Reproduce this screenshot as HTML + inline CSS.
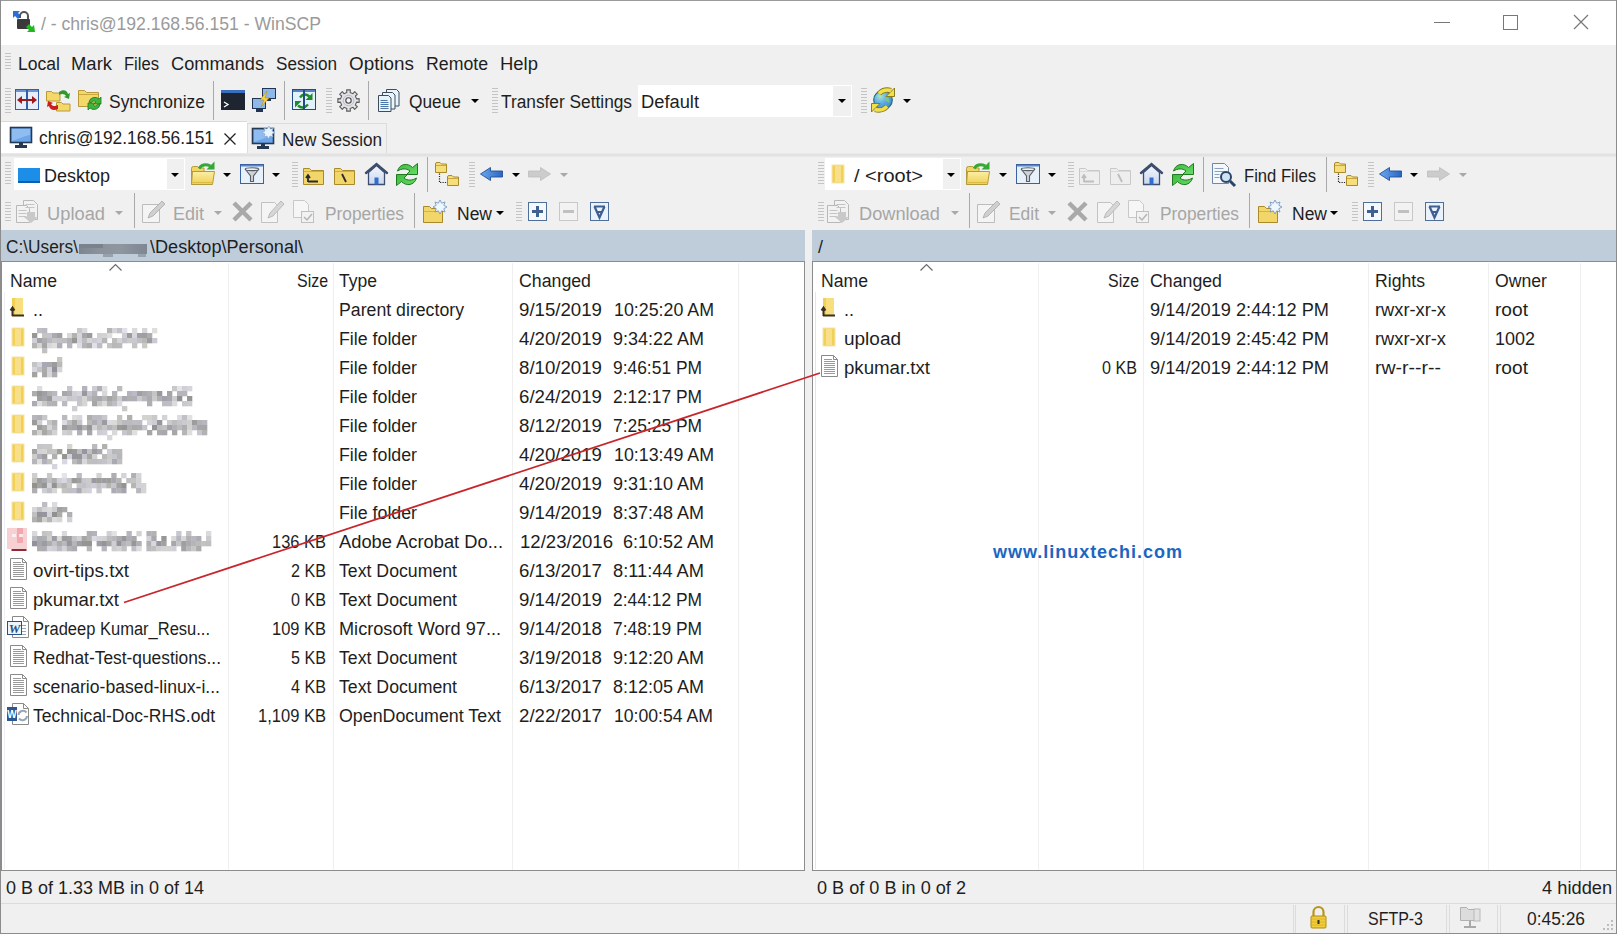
<!DOCTYPE html>
<html><head><meta charset="utf-8">
<style>
*{box-sizing:border-box;margin:0;padding:0}
html,body{width:1617px;height:934px;overflow:hidden;background:#f0f0f0;font-family:"Liberation Sans",sans-serif;font-size:18px;color:#1e1e1e}
.a{position:absolute}
svg.a{overflow:visible}
.t{position:absolute;white-space:pre;line-height:18px}
.grip{position:absolute;width:6px;background:repeating-linear-gradient(to bottom,#c4c4c4 0 1px,transparent 1px 3px)}
.dd{position:absolute;width:0;height:0;border-left:4px solid transparent;border-right:4px solid transparent;border-top:4px solid #000}
.g{color:#a6a6a6}
</style></head><body>
<div class="a" style="left:0px;top:0px;width:1617px;height:45px;background:#fff"></div>
<div class="t" style="left:40.70px;top:15px;color:#9a9a9a;transform:scaleX(0.9776);transform-origin:0 0">/ - chris@192.168.56.151 - WinSCP</div>
<svg class="a" style="left:11px;top:9px" width="26" height="25" viewBox="0 0 26 25">
<path d="M2 2h7l-2 2 3 3-3 3-3-3-2 2z" fill="#2a6fd6"/>
<path d="M9 9v-2a4 4 0 0 1 8 0v3" fill="none" stroke="#555" stroke-width="2"/>
<rect x="6" y="10" width="13" height="10" rx="1" fill="#3a3a3a"/>
<path d="M24 23h-8l2-2-3-3 3-3 3 3 2-2z" fill="#1fb81f"/>
</svg>
<div class="a" style="left:1434px;top:22px;width:16px;height:1px;background:#777"></div>
<div class="a" style="left:1503px;top:15px;width:15px;height:15px;border:1px solid #777"></div>
<svg class="a" style="left:1573px;top:14px" width="16" height="16" viewBox="0 0 16 16"><path d="M1 1L15 15M15 1L1 15" stroke="#777" stroke-width="1.2"/></svg>
<div class="grip" style="left:5px;top:53px;height:18px"></div>
<div class="t" style="left:17.70px;top:55px;;transform:scaleX(0.9760);transform-origin:0 0">Local</div>
<div class="t" style="left:70.70px;top:55px;;transform:scaleX(1.0250);transform-origin:0 0">Mark</div>
<div class="t" style="left:123.70px;top:55px;;transform:scaleX(0.9207);transform-origin:0 0">Files</div>
<div class="t" style="left:170.70px;top:55px;;transform:scaleX(1.0105);transform-origin:0 0">Commands</div>
<div class="t" style="left:275.70px;top:55px;;transform:scaleX(0.9524);transform-origin:0 0">Session</div>
<div class="t" style="left:348.70px;top:55px;;transform:scaleX(1.0476);transform-origin:0 0">Options</div>
<div class="t" style="left:425.70px;top:55px;;transform:scaleX(0.9836);transform-origin:0 0">Remote</div>
<div class="t" style="left:499.70px;top:55px;;transform:scaleX(1.0262);transform-origin:0 0">Help</div>
<div class="grip" style="left:5px;top:88px;height:25px"></div>
<svg class="a" style="left:15px;top:89px" width="24" height="21" viewBox="0 0 24 21">
<rect x="0.5" y="0.5" width="23" height="20" fill="#e6eefa" stroke="#2f5fa8"/>
<rect x="1" y="1" width="22" height="2" fill="#6c95d0"/>
<rect x="11" y="0" width="2" height="21" fill="#2f5fa8"/>
<path d="M2 11l5-4v3h10v-3l5 4-5 4v-3H7v3z" fill="#a01818"/></svg>
<svg class="a" style="left:46px;top:88px" width="25" height="24" viewBox="0 0 25 24">
<path d="M0.5 3.5h5l1.5 1.5h7v8h-13.5z" fill="#f5d86a" stroke="#b99a3a"/>
<path d="M10.5 14.5h5l1.5 1.5h7v7h-13.5z" fill="#f5d86a" stroke="#b99a3a"/>
<path d="M13 4c4-3 8-2 9 2l2-1-1 6-5-2 2-1c-1-2-4-3-7-1z" fill="#2e9a2e"/>
<path d="M12 21c-4 2-8 1-9-3l-2 1 1-6 5 2-2 1c1 2 4 3 7 1z" fill="#c81e1e"/></svg>
<svg class="a" style="left:78px;top:88px" width="25" height="24" viewBox="0 0 25 24">
<path d="M0.5 2.5h6l2 2h12v14h-20z" fill="#f5d86a" stroke="#b99a3a"/>
<rect x="1" y="6" width="19" height="1" fill="#c9a842"/>
<path d="M11 14a6 6 0 0 1 10-3l2-2v7h-7l2-2a3 3 0 0 0-5 1z" fill="#3fb43f" stroke="#1f7a1f" stroke-width="0.8"/>
<path d="M22 16a6 6 0 0 1-10 4l-2 2v-7h7l-2 2a3 3 0 0 0 5-1z" fill="#3fb43f" stroke="#1f7a1f" stroke-width="0.8"/></svg>
<div class="t" style="left:108.70px;top:93px;;transform:scaleX(0.9691);transform-origin:0 0">Synchronize</div>
<div class="a" style="left:213px;top:81px;width:1px;height:39px;background:#a9a9a9"></div>
<svg class="a" style="left:221px;top:90px" width="24" height="20" viewBox="0 0 24 20">
<rect x="0" y="0" width="24" height="20" fill="#1f2530"/>
<rect x="0" y="0" width="24" height="3" fill="#3a6fc0"/>
<path d="M3 12l4 2.5-4 2.5" fill="none" stroke="#fff" stroke-width="1.3"/></svg>
<svg class="a" style="left:252px;top:88px" width="25" height="24" viewBox="0 0 25 24">
<rect x="10.5" y="0.5" width="13" height="10" fill="#8fb8ea" stroke="#1f3553"/>
<rect x="15" y="11" width="4" height="2" fill="#1f3553"/>
<rect x="0.5" y="10.5" width="13" height="10" fill="#8fb8ea" stroke="#1f3553"/>
<rect x="4" y="21" width="7" height="3" fill="#1f3553"/>
<path d="M15 3l-7 9h4l-3 7 8-9h-4z" fill="#f5d44a" stroke="#b88b10" stroke-width="0.6"/></svg>
<div class="a" style="left:284px;top:81px;width:1px;height:39px;background:#a9a9a9"></div>
<svg class="a" style="left:292px;top:89px" width="24" height="21" viewBox="0 0 24 21">
<rect x="0.5" y="0.5" width="23" height="20" fill="#e2f2fa" stroke="#234a85"/>
<rect x="1" y="1" width="22" height="2" fill="#5a82c0"/>
<path d="M20.5 4V11H13.5Z" fill="#1f8a2a"/>
<path d="M8 8.5Q12 3 17.5 7.5" fill="none" stroke="#1f8a2a" stroke-width="2.4"/>
<path d="M3 12H9.5L3 18.6Z" fill="#1f8a2a"/>
<path d="M6 16.5Q11 21 16 15.5" fill="none" stroke="#1f8a2a" stroke-width="2.4"/>
<rect x="11" y="0" width="2" height="21" fill="#234a85"/></svg>
<div class="grip" style="left:326px;top:88px;height:25px"></div>
<svg class="a" style="left:337px;top:89px" width="23" height="23" viewBox="0 0 23 23">
<path d="M22.14,9.62 L22.14,13.38 L19.54,13.13 L18.34,16.03 L20.35,17.69 L17.69,20.35 L16.03,18.34 L13.13,19.54 L13.38,22.14 L9.62,22.14 L9.87,19.54 L6.97,18.34 L5.31,20.35 L2.65,17.69 L4.66,16.03 L3.46,13.13 L0.86,13.38 L0.86,9.62 L3.46,9.87 L4.66,6.97 L2.65,5.31 L5.31,2.65 L6.97,4.66 L9.87,3.46 L9.62,0.86 L13.38,0.86 L13.13,3.46 L16.03,4.66 L17.69,2.65 L20.35,5.31 L18.34,6.97 L19.54,9.87Z" fill="#e2e4e9" stroke="#5c5c5c" stroke-width="1.1" stroke-linejoin="round"/>
<circle cx="11.5" cy="11.5" r="5.3" fill="none" stroke="#b8bcc4" stroke-width="1"/>
<circle cx="11.5" cy="11.5" r="2.7" fill="#f4f4f6" stroke="#4a4a4a" stroke-width="1.1"/></svg>
<div class="a" style="left:368px;top:81px;width:1px;height:39px;background:#a9a9a9"></div>
<svg class="a" style="left:378px;top:89px" width="22" height="23" viewBox="0 0 22 23">
<path d="M8.5 0.5h10l2.5 2.5v14h-12.5z" fill="#eaf4fb" stroke="#3d4d5e"/>
<path d="M4.5 3.5h10l2.5 2.5v14h-12.5z" fill="#eaf4fb" stroke="#3d4d5e"/>
<path d="M0.5 6.5h10l2.5 2.5v13.5h-12.5z" fill="#eaf4fb" stroke="#3d4d5e"/>
<g stroke="#4a76a8" stroke-width="1.2"><path d="M2.5 11.5h7M2.5 13.5h8M2.5 15.5h8M2.5 17.5h8M2.5 19.5h8"/></g></svg>
<div class="t" style="left:408.70px;top:93px;;transform:scaleX(0.9621);transform-origin:0 0">Queue</div>
<div class="dd" style="left:471px;top:99px;border-top-color:#000"></div>
<div class="grip" style="left:492px;top:88px;height:25px"></div>
<div class="t" style="left:500.70px;top:93px;;transform:scaleX(0.9605);transform-origin:0 0">Transfer Settings</div>
<div class="a" style="left:638px;top:85px;width:214px;height:32px;background:#fff"></div>
<div class="a" style="left:833px;top:86px;width:18px;height:30px;background:#f0f0f0"></div>
<div class="t" style="left:640.70px;top:93px;;transform:scaleX(1.0167);transform-origin:0 0">Default</div>
<div class="dd" style="left:838px;top:99px;border-top-color:#000"></div>
<div class="grip" style="left:861px;top:88px;height:25px"></div>
<svg class="a" style="left:870px;top:88px" width="26" height="24" viewBox="0 0 26 24">
<defs><radialGradient id="glg" cx="0.35" cy="0.3" r="0.8"><stop offset="0" stop-color="#a8e8c8"/><stop offset="0.5" stop-color="#5aa8e8"/><stop offset="1" stop-color="#3f8ad0"/></radialGradient></defs>
<circle cx="13" cy="12" r="9.3" fill="url(#glg)" stroke="#2a6a7a" stroke-width="1.2"/>
<path d="M17 9c2 1 3 3 2 6-1-1-2-2-3-2s-1-3 1-4z" fill="#7ccf7c" opacity="0.8"/>
<g id="garr"><path d="M9 5.5Q14 0.5 21 2.5" fill="none" stroke="#8a7a20" stroke-width="5.2"/>
<path d="M24.5 0V8.5H16Z" fill="#f2e04a" stroke="#8a7a20" stroke-width="1"/>
<path d="M9 5.5Q14 0.5 21 2.5" fill="none" stroke="#f2e04a" stroke-width="3.4"/></g>
<g transform="rotate(180 13 12)"><path d="M9 5.5Q14 0.5 21 2.5" fill="none" stroke="#8a7a20" stroke-width="5.2"/>
<path d="M24.5 0V8.5H16Z" fill="#f2e04a" stroke="#8a7a20" stroke-width="1"/>
<path d="M9 5.5Q14 0.5 21 2.5" fill="none" stroke="#f2e04a" stroke-width="3.4"/></g></svg>
<div class="dd" style="left:903px;top:99px;border-top-color:#000"></div>
<div class="a" style="left:1px;top:153px;width:1615px;height:4px;background:linear-gradient(#ececec,#dedede 50%,#ececec)"></div>
<div class="a" style="left:1px;top:121px;width:246px;height:1px;background:#d9d9d9"></div>
<div class="a" style="left:1px;top:122px;width:246px;height:31px;background:#fff"></div>
<svg class="a" style="left:10px;top:127px" width="22" height="21" viewBox="0 0 22 21">
<rect x="0.5" y="0.5" width="21" height="15" fill="#6da6ec" stroke="#253a52" stroke-width="1.6"/>
<path d="M2 2h18v6c-6 1-12 4-18 6z" fill="#a8cdf5" opacity="0.6"/>
<rect x="9" y="16" width="4" height="2" fill="#253a52"/>
<rect x="5" y="18" width="12" height="3" fill="#253a52"/></svg>
<div class="t" style="left:38.70px;top:129px;;transform:scaleX(0.9647);transform-origin:0 0">chris@192.168.56.151</div>
<svg class="a" style="left:224px;top:132.5px" width="12" height="12" viewBox="0 0 12 12"><path d="M0.5 0.5L11.5 11.5M11.5 0.5L0.5 11.5" stroke="#222" stroke-width="1.3"/></svg>
<div class="a" style="left:247px;top:123px;width:140px;height:30px;background:#f0f0f0;border:1px solid #dcdcdc;border-bottom:none"></div>
<svg class="a" style="left:252px;top:128px" width="22" height="21" viewBox="0 0 22 21">
<rect x="0.5" y="0.5" width="21" height="15" fill="#6da6ec" stroke="#253a52" stroke-width="1.6"/>
<path d="M2 2h18v6c-6 1-12 4-18 6z" fill="#a8cdf5" opacity="0.6"/>
<rect x="9" y="16" width="4" height="2" fill="#253a52"/>
<rect x="5" y="18" width="12" height="3" fill="#253a52"/><path d="M17 -2l1.5 3 3-1-1.5 3 3 1.5-3 1.5 1 3-3-1-1.5 3-1.5-3-3 1 1-3-3-1.5 3-1.5-1-3 3 1z" fill="#e8f3ff" stroke="#7aa0c8" stroke-width="0.6"/></svg>
<div class="t" style="left:281.70px;top:131px;;transform:scaleX(0.9520);transform-origin:0 0">New Session</div>
<div class="grip" style="left:5px;top:162px;height:24px"></div>
<div class="a" style="left:14px;top:158px;width:171px;height:32px;background:#fff"></div>
<div class="a" style="left:167px;top:159px;width:17px;height:30px;background:#f0f0f0"></div>
<svg class="a" style="left:18px;top:168px" width="22" height="15" viewBox="0 0 22 15">
<rect x="0" y="0" width="22" height="15" fill="#1c8ee8"/>
<rect x="0" y="13" width="22" height="2" fill="#0d5fb0"/></svg>
<div class="t" style="left:43.70px;top:167px;;transform:scaleX(0.9993);transform-origin:0 0">Desktop</div>
<div class="dd" style="left:171px;top:173px;border-top-color:#000"></div>
<svg class="a" style="left:191px;top:161px" width="24" height="24" viewBox="0 0 24 24">
<defs><linearGradient id="ofg" x1="0" y1="0" x2="0" y2="1"><stop offset="0" stop-color="#fbeea8"/><stop offset="1" stop-color="#f0d050"/></linearGradient></defs>
<path d="M0.5 23.5V7.5Q0.5 5.5 2.5 5.5H6.5L8 7H13V10.5H0.5" fill="#f2d563" stroke="#b39a3a"/>
<path d="M1.5 10.5H23.5L21.5 23.5H0.5Z" fill="url(#ofg)" stroke="#b39a3a"/>
<path d="M1.5 21.5H21.5" stroke="#d9bb45" stroke-width="1"/>
<path d="M23.5 0.5V8.5H15.5Z" fill="#35a835"/>
<path d="M8 7.5Q12 1.5 19.5 5" fill="none" stroke="#35a835" stroke-width="3"/></svg>
<div class="dd" style="left:223px;top:173px;border-top-color:#000"></div>
<svg class="a" style="left:240px;top:164px" width="24" height="20" viewBox="0 0 24 20">
<rect x="0.5" y="0.5" width="23" height="19" fill="#e6f1fb" stroke="#3b62a0"/>
<rect x="1" y="1" width="22" height="1.5" fill="#5b86c8"/>
<path d="M5.5 5.5L10.5 12V17.5H13.5V12L18.5 5.5" fill="#cfd3d8" stroke="#5a5f66" stroke-width="1.1"/>
<ellipse cx="12" cy="5.2" rx="6.8" ry="1.4" fill="#eef0f2" stroke="#5a5f66" stroke-width="1.1"/></svg>
<div class="dd" style="left:272px;top:173px;border-top-color:#000"></div>
<div class="grip" style="left:292px;top:162px;height:25px"></div>
<svg class="a" style="left:303px;top:166px" width="21" height="19" viewBox="0 0 21 19">
<path d="M0.5 2.5h6l2 2h12v14h-20z" fill="#f3d66a" stroke="#a88a2a"/>
<rect x="1" y="5" width="19" height="1" fill="#a88a2a" opacity="0.5"/>
<path d="M5 15.5h10M5 16v-6M3 12l2-3 2 3" fill="none" stroke="#2b2b2b" stroke-width="1.8"/></svg>
<svg class="a" style="left:334px;top:166px" width="21" height="19" viewBox="0 0 21 19">
<path d="M0.5 2.5h6l2 2h12v14h-20z" fill="#f3d66a" stroke="#a88a2a"/>
<rect x="1" y="5" width="19" height="1" fill="#a88a2a" opacity="0.5"/>
<path d="M8 8l4 8" fill="none" stroke="#2b2b2b" stroke-width="1.8"/></svg>
<svg class="a" style="left:365px;top:163px" width="23" height="22" viewBox="0 0 23 22">
<defs><linearGradient id="hg" x1="0" y1="0" x2="0" y2="1"><stop offset="0" stop-color="#f4f7fd"/><stop offset="1" stop-color="#c8d6ef"/></linearGradient></defs>
<path d="M3.5 9.5L11.5 2.5L19.5 9.5V21.5H3.5z" fill="url(#hg)" stroke="#3c4d6e" stroke-width="1.3"/>
<path d="M1 10L11.5 1L22 10" fill="none" stroke="#3c4d6e" stroke-width="2.4" stroke-linecap="round"/>
<rect x="9.5" y="14.5" width="4" height="7" fill="#2f6fd0"/></svg>
<svg class="a" style="left:396px;top:162.5px" width="22" height="23" viewBox="0 0 22 23">
<defs><linearGradient id="rg" x1="0" y1="0" x2="1" y2="1"><stop offset="0" stop-color="#3fba3f"/><stop offset="1" stop-color="#66dc66"/></linearGradient></defs>
<path d="M1.5 8C3.5 0.5 12 -0.5 16.5 4.5L21.5 0.5V11.5H10.5L14 8C10.5 5 5.5 5.5 1.5 8Z" fill="url(#rg)" stroke="#1f7a1f" stroke-width="1" stroke-linejoin="round"/>
<path d="M20.5 15C18.5 22.5 10 23.5 5.5 18.5L0.5 22.5V11.5H11.5L8 15C11.5 18 16.5 17.5 20.5 15Z" fill="url(#rg)" stroke="#1f7a1f" stroke-width="1" stroke-linejoin="round"/></svg>
<div class="a" style="left:427px;top:157px;width:1px;height:35px;background:#a9a9a9"></div>
<svg class="a" style="left:435px;top:162px" width="24" height="24" viewBox="0 0 24 24">
<path d="M0.5 10.5V2Q0.5 0.5 2 0.5H5L6.5 2H11.5V10.5Z" fill="#f6de7a" stroke="#a88a2a"/>
<path d="M1 3.5H11" stroke="#c9a842"/>
<path d="M12.5 23.5V15Q12.5 13.5 14 13.5H17L18.5 15H23.5V23.5Z" fill="#f6de7a" stroke="#a88a2a"/>
<path d="M13 16.5H23" stroke="#c9a842"/>
<path d="M4.5 11.5V20.5H12" fill="none" stroke="#222" stroke-width="1.2" stroke-dasharray="1.2 1.2"/></svg>
<div class="grip" style="left:469px;top:162px;height:25px"></div>
<svg class="a" style="left:480px;top:167px" width="23" height="14" viewBox="0 0 23 14">
<defs><linearGradient id="bkg" x1="0" y1="0" x2="1" y2="0"><stop offset="0" stop-color="#6aa8f0"/><stop offset="1" stop-color="#2a66c0"/></linearGradient></defs>
<path d="M0.5 7L10.5 0.5V4H22.5V10H10.5V13.5Z" fill="url(#bkg)" stroke="#23509a" stroke-width="0.9" stroke-linejoin="round"/></svg>
<div class="dd" style="left:512px;top:173px;border-top-color:#000"></div>
<svg class="a" style="left:528px;top:167px" width="23" height="14" viewBox="0 0 23 14">
<path d="M22.5 7L12.5 0.5V4H0.5V10H12.5V13.5Z" fill="#cccccc" stroke="#bdbdbd" stroke-width="0.8" stroke-linejoin="round"/></svg>
<div class="dd" style="left:560px;top:173px;border-top-color:#a8a8a8"></div>
<div class="grip" style="left:5px;top:202px;height:20px"></div>
<svg class="a" style="left:16px;top:200px" width="23" height="23" viewBox="0 0 23 23">
<path d="M7.5 0.5h10l4 4v15h-14z" fill="#f2f2f2" stroke="#b8b8b8"/>
<path d="M0.5 5.5h10l3 3v14h-13z" fill="#f2f2f2" stroke="#b8b8b8"/>
<g stroke="#c4c4c4"><path d="M2.5 10.5h8M2.5 13.5h8M2.5 16.5h8M9.5 4.5h9M9.5 7.5h9"/></g>
<path d="M11 12h8v5h3l-7 6-7-6h3z" fill="#c9c9c9"/></svg>
<div class="t" style="left:46.70px;top:205px;color:#a6a6a6;transform:scaleX(1.0167);transform-origin:0 0">Upload</div>
<div class="dd" style="left:115px;top:211px;border-top-color:#a8a8a8"></div>
<div class="a" style="left:134px;top:193px;width:1px;height:35px;background:#a9a9a9"></div>
<svg class="a" style="left:142px;top:200px" width="24" height="23" viewBox="0 0 24 23">
<path d="M0.5 4.5h17v18h-17z" fill="#f4f4f4" stroke="#bcbcbc"/>
<path d="M6 18l2-5 12-12 3 3-12 12z" fill="#cfcfcf" stroke="#a8a8a8" stroke-width="0.8"/></svg>
<div class="t" style="left:172.70px;top:205px;color:#a6a6a6;transform:scaleX(0.9990);transform-origin:0 0">Edit</div>
<div class="dd" style="left:214px;top:211px;border-top-color:#a8a8a8"></div>
<svg class="a" style="left:232px;top:201px" width="21" height="21" viewBox="0 0 21 21">
<path d="M2 2l17 17M19 2l-17 17" stroke="#a9a9a9" stroke-width="4.5"/></svg>
<svg class="a" style="left:261px;top:200px" width="24" height="23" viewBox="0 0 24 23">
<path d="M0.5 2.5h13l3 3v17h-16z" fill="#f4f4f4" stroke="#c2c2c2"/>
<path d="M7 18l2-5 11-12 3 3-11 12z" fill="#d6d6d6" stroke="#b0b0b0" stroke-width="0.8"/></svg>
<svg class="a" style="left:293px;top:200px" width="22" height="23" viewBox="0 0 22 23">
<path d="M0.5 0.5h11l4 4v13h-15z" fill="#f6f6f6" stroke="#c8c8c8"/>
<rect x="8.5" y="11.5" width="12" height="11" fill="#f2f2f2" stroke="#c0c0c0"/>
<path d="M11 17l3 3 5-6" fill="none" stroke="#b5b5b5" stroke-width="1.5"/></svg>
<div class="t" style="left:324.70px;top:205px;color:#a6a6a6;transform:scaleX(0.9629);transform-origin:0 0">Properties</div>
<div class="a" style="left:414px;top:193px;width:1px;height:35px;background:#a9a9a9"></div>
<svg class="a" style="left:423px;top:200px" width="24" height="23" viewBox="0 0 24 23">
<path d="M0.5 6.5h6l2 2h11v14h-19z" fill="#f3d66a" stroke="#a88a2a"/>
<rect x="1" y="11" width="18" height="1" fill="#d4b648"/>
<path d="M17 0l1.7 3.2 3.3-1.2-1.2 3.3 3.2 1.7-3.2 1.7 1.2 3.3-3.3-1.2-1.7 3.2-1.7-3.2-3.3 1.2 1.2-3.3-3.2-1.7 3.2-1.7-1.2-3.3 3.3 1.2z" fill="#eef6ff" stroke="#6b8fb8" stroke-width="0.8"/></svg>
<div class="t" style="left:456.70px;top:205px;;transform:scaleX(0.9718);transform-origin:0 0">New</div>
<div class="dd" style="left:496px;top:211px;border-top-color:#000"></div>
<div class="grip" style="left:516px;top:202px;height:20px"></div>
<svg class="a" style="left:528px;top:202px" width="19" height="19" viewBox="0 0 19 19">
<rect x="0.5" y="0.5" width="18" height="18" fill="#f4f8fd" stroke="#4f6f9a"/>
<path d="M9.5 4v11M4 9.5h11" stroke="#3f5f90" stroke-width="3"/></svg>
<svg class="a" style="left:559px;top:202px" width="19" height="19" viewBox="0 0 19 19">
<rect x="0.5" y="0.5" width="18" height="18" fill="#f2f2f2" stroke="#c8c8c8"/>
<path d="M4 9.5h11" stroke="#c0c0c0" stroke-width="3"/></svg>
<svg class="a" style="left:590px;top:202px" width="19" height="19" viewBox="0 0 19 19">
<rect x="0.5" y="0.5" width="18" height="18" fill="#eaf2fb" stroke="#4f6f9a"/>
<path d="M4 4.5h11M4.5 4.5l5 11 5-11M7 10h5" fill="none" stroke="#3f5f90" stroke-width="2.2"/></svg>
<div class="grip" style="left:818px;top:162px;height:24px"></div>
<div class="a" style="left:825px;top:158px;width:136px;height:32px;background:#fff"></div>
<div class="a" style="left:943px;top:159px;width:17px;height:30px;background:#f0f0f0"></div>
<svg class="a" style="left:831px;top:165px" width="15" height="19" viewBox="0 0 15 19">
<rect x="1" y="0" width="12" height="18" fill="#f2cf55"/>
<rect x="4" y="1" width="6" height="16" fill="#f8e08a"/>
<rect x="1" y="0" width="12" height="18" fill="none" stroke="#f5e6b0" stroke-width="1"/></svg>
<div class="t" style="left:853.70px;top:167px;;transform:scaleX(1.1121);transform-origin:0 0">/ &lt;root&gt;</div>
<div class="dd" style="left:947px;top:173px;border-top-color:#000"></div>
<svg class="a" style="left:966px;top:161px" width="24" height="24" viewBox="0 0 24 24">
<defs><linearGradient id="ofg" x1="0" y1="0" x2="0" y2="1"><stop offset="0" stop-color="#fbeea8"/><stop offset="1" stop-color="#f0d050"/></linearGradient></defs>
<path d="M0.5 23.5V7.5Q0.5 5.5 2.5 5.5H6.5L8 7H13V10.5H0.5" fill="#f2d563" stroke="#b39a3a"/>
<path d="M1.5 10.5H23.5L21.5 23.5H0.5Z" fill="url(#ofg)" stroke="#b39a3a"/>
<path d="M1.5 21.5H21.5" stroke="#d9bb45" stroke-width="1"/>
<path d="M23.5 0.5V8.5H15.5Z" fill="#35a835"/>
<path d="M8 7.5Q12 1.5 19.5 5" fill="none" stroke="#35a835" stroke-width="3"/></svg>
<div class="dd" style="left:999px;top:173px;border-top-color:#000"></div>
<svg class="a" style="left:1016px;top:164px" width="24" height="20" viewBox="0 0 24 20">
<rect x="0.5" y="0.5" width="23" height="19" fill="#e6f1fb" stroke="#3b62a0"/>
<rect x="1" y="1" width="22" height="1.5" fill="#5b86c8"/>
<path d="M5.5 5.5L10.5 12V17.5H13.5V12L18.5 5.5" fill="#cfd3d8" stroke="#5a5f66" stroke-width="1.1"/>
<ellipse cx="12" cy="5.2" rx="6.8" ry="1.4" fill="#eef0f2" stroke="#5a5f66" stroke-width="1.1"/></svg>
<div class="dd" style="left:1048px;top:173px;border-top-color:#000"></div>
<div class="grip" style="left:1068px;top:162px;height:25px"></div>
<svg class="a" style="left:1079px;top:166px" width="21" height="19" viewBox="0 0 21 19">
<path d="M0.5 2.5h6l2 2h12v14h-20z" fill="#eeeeee" stroke="#c8c8c8"/>
<rect x="1" y="5" width="19" height="1" fill="#c8c8c8" opacity="0.5"/>
<path d="M5 15.5h10M5 16v-6M3 12l2-3 2 3" fill="none" stroke="#bdbdbd" stroke-width="1.8"/></svg>
<svg class="a" style="left:1110px;top:166px" width="21" height="19" viewBox="0 0 21 19">
<path d="M0.5 2.5h6l2 2h12v14h-20z" fill="#eeeeee" stroke="#c8c8c8"/>
<rect x="1" y="5" width="19" height="1" fill="#c8c8c8" opacity="0.5"/>
<path d="M8 8l4 8" fill="none" stroke="#bdbdbd" stroke-width="1.8"/></svg>
<svg class="a" style="left:1140px;top:163px" width="23" height="22" viewBox="0 0 23 22">
<defs><linearGradient id="hg" x1="0" y1="0" x2="0" y2="1"><stop offset="0" stop-color="#f4f7fd"/><stop offset="1" stop-color="#c8d6ef"/></linearGradient></defs>
<path d="M3.5 9.5L11.5 2.5L19.5 9.5V21.5H3.5z" fill="url(#hg)" stroke="#3c4d6e" stroke-width="1.3"/>
<path d="M1 10L11.5 1L22 10" fill="none" stroke="#3c4d6e" stroke-width="2.4" stroke-linecap="round"/>
<rect x="9.5" y="14.5" width="4" height="7" fill="#2f6fd0"/></svg>
<svg class="a" style="left:1172px;top:162.5px" width="22" height="23" viewBox="0 0 22 23">
<defs><linearGradient id="rg" x1="0" y1="0" x2="1" y2="1"><stop offset="0" stop-color="#3fba3f"/><stop offset="1" stop-color="#66dc66"/></linearGradient></defs>
<path d="M1.5 8C3.5 0.5 12 -0.5 16.5 4.5L21.5 0.5V11.5H10.5L14 8C10.5 5 5.5 5.5 1.5 8Z" fill="url(#rg)" stroke="#1f7a1f" stroke-width="1" stroke-linejoin="round"/>
<path d="M20.5 15C18.5 22.5 10 23.5 5.5 18.5L0.5 22.5V11.5H11.5L8 15C11.5 18 16.5 17.5 20.5 15Z" fill="url(#rg)" stroke="#1f7a1f" stroke-width="1" stroke-linejoin="round"/></svg>
<div class="a" style="left:1203px;top:157px;width:1px;height:35px;background:#a9a9a9"></div>
<svg class="a" style="left:1212px;top:163px" width="24" height="23" viewBox="0 0 24 23">
<path d="M0.5 0.5h12l4 4v16h-16z" fill="#f4f7fb" stroke="#6f87a8"/>
<g stroke="#8aa0bf"><path d="M2.5 5.5h9M2.5 8.5h11M2.5 11.5h5M2.5 14.5h5"/></g>
<circle cx="14" cy="14" r="5" fill="#cfe3f7" stroke="#2c4466" stroke-width="2"/>
<path d="M18 18l5 5" stroke="#2c4466" stroke-width="3"/></svg>
<div class="t" style="left:1243.70px;top:167px;;transform:scaleX(0.9227);transform-origin:0 0">Find Files</div>
<div class="a" style="left:1326px;top:157px;width:1px;height:35px;background:#a9a9a9"></div>
<svg class="a" style="left:1334px;top:162px" width="24" height="24" viewBox="0 0 24 24">
<path d="M0.5 10.5V2Q0.5 0.5 2 0.5H5L6.5 2H11.5V10.5Z" fill="#f6de7a" stroke="#a88a2a"/>
<path d="M1 3.5H11" stroke="#c9a842"/>
<path d="M12.5 23.5V15Q12.5 13.5 14 13.5H17L18.5 15H23.5V23.5Z" fill="#f6de7a" stroke="#a88a2a"/>
<path d="M13 16.5H23" stroke="#c9a842"/>
<path d="M4.5 11.5V20.5H12" fill="none" stroke="#222" stroke-width="1.2" stroke-dasharray="1.2 1.2"/></svg>
<div class="grip" style="left:1368px;top:162px;height:25px"></div>
<svg class="a" style="left:1379px;top:167px" width="23" height="14" viewBox="0 0 23 14">
<defs><linearGradient id="bkg" x1="0" y1="0" x2="1" y2="0"><stop offset="0" stop-color="#6aa8f0"/><stop offset="1" stop-color="#2a66c0"/></linearGradient></defs>
<path d="M0.5 7L10.5 0.5V4H22.5V10H10.5V13.5Z" fill="url(#bkg)" stroke="#23509a" stroke-width="0.9" stroke-linejoin="round"/></svg>
<div class="dd" style="left:1410px;top:173px;border-top-color:#000"></div>
<svg class="a" style="left:1427px;top:167px" width="23" height="14" viewBox="0 0 23 14">
<path d="M22.5 7L12.5 0.5V4H0.5V10H12.5V13.5Z" fill="#cccccc" stroke="#bdbdbd" stroke-width="0.8" stroke-linejoin="round"/></svg>
<div class="dd" style="left:1459px;top:173px;border-top-color:#a8a8a8"></div>
<div class="grip" style="left:818px;top:202px;height:20px"></div>
<svg class="a" style="left:827px;top:200px" width="23" height="23" viewBox="0 0 23 23">
<path d="M7.5 0.5h10l4 4v15h-14z" fill="#f2f2f2" stroke="#b8b8b8"/>
<path d="M0.5 5.5h10l3 3v14h-13z" fill="#f2f2f2" stroke="#b8b8b8"/>
<g stroke="#c4c4c4"><path d="M2.5 10.5h8M2.5 13.5h8M2.5 16.5h8M9.5 4.5h9M9.5 7.5h9"/></g>
<path d="M11 12h8v5h3l-7 6-7-6h3z" fill="#c9c9c9"/></svg>
<div class="t" style="left:858.70px;top:205px;color:#a6a6a6;transform:scaleX(1.0117);transform-origin:0 0">Download</div>
<div class="dd" style="left:951px;top:211px;border-top-color:#a8a8a8"></div>
<div class="a" style="left:969px;top:193px;width:1px;height:35px;background:#a9a9a9"></div>
<svg class="a" style="left:977px;top:200px" width="24" height="23" viewBox="0 0 24 23">
<path d="M0.5 4.5h17v18h-17z" fill="#f4f4f4" stroke="#bcbcbc"/>
<path d="M6 18l2-5 12-12 3 3-12 12z" fill="#cfcfcf" stroke="#a8a8a8" stroke-width="0.8"/></svg>
<div class="t" style="left:1008.70px;top:205px;color:#a6a6a6;transform:scaleX(0.9668);transform-origin:0 0">Edit</div>
<div class="dd" style="left:1048px;top:211px;border-top-color:#a8a8a8"></div>
<svg class="a" style="left:1067px;top:201px" width="21" height="21" viewBox="0 0 21 21">
<path d="M2 2l17 17M19 2l-17 17" stroke="#a9a9a9" stroke-width="4.5"/></svg>
<svg class="a" style="left:1097px;top:200px" width="24" height="23" viewBox="0 0 24 23">
<path d="M0.5 2.5h13l3 3v17h-16z" fill="#f4f4f4" stroke="#c2c2c2"/>
<path d="M7 18l2-5 11-12 3 3-11 12z" fill="#d6d6d6" stroke="#b0b0b0" stroke-width="0.8"/></svg>
<svg class="a" style="left:1128px;top:200px" width="22" height="23" viewBox="0 0 22 23">
<path d="M0.5 0.5h11l4 4v13h-15z" fill="#f6f6f6" stroke="#c8c8c8"/>
<rect x="8.5" y="11.5" width="12" height="11" fill="#f2f2f2" stroke="#c0c0c0"/>
<path d="M11 17l3 3 5-6" fill="none" stroke="#b5b5b5" stroke-width="1.5"/></svg>
<div class="t" style="left:1159.70px;top:205px;color:#a6a6a6;transform:scaleX(0.9629);transform-origin:0 0">Properties</div>
<div class="a" style="left:1249px;top:193px;width:1px;height:35px;background:#a9a9a9"></div>
<svg class="a" style="left:1258px;top:200px" width="24" height="23" viewBox="0 0 24 23">
<path d="M0.5 6.5h6l2 2h11v14h-19z" fill="#f3d66a" stroke="#a88a2a"/>
<rect x="1" y="11" width="18" height="1" fill="#d4b648"/>
<path d="M17 0l1.7 3.2 3.3-1.2-1.2 3.3 3.2 1.7-3.2 1.7 1.2 3.3-3.3-1.2-1.7 3.2-1.7-3.2-3.3 1.2 1.2-3.3-3.2-1.7 3.2-1.7-1.2-3.3 3.3 1.2z" fill="#eef6ff" stroke="#6b8fb8" stroke-width="0.8"/></svg>
<div class="t" style="left:1291.70px;top:205px;;transform:scaleX(0.9718);transform-origin:0 0">New</div>
<div class="dd" style="left:1330px;top:211px;border-top-color:#000"></div>
<div class="grip" style="left:1352px;top:202px;height:20px"></div>
<svg class="a" style="left:1363px;top:202px" width="19" height="19" viewBox="0 0 19 19">
<rect x="0.5" y="0.5" width="18" height="18" fill="#f4f8fd" stroke="#4f6f9a"/>
<path d="M9.5 4v11M4 9.5h11" stroke="#3f5f90" stroke-width="3"/></svg>
<svg class="a" style="left:1394px;top:202px" width="19" height="19" viewBox="0 0 19 19">
<rect x="0.5" y="0.5" width="18" height="18" fill="#f2f2f2" stroke="#c8c8c8"/>
<path d="M4 9.5h11" stroke="#c0c0c0" stroke-width="3"/></svg>
<svg class="a" style="left:1425px;top:202px" width="19" height="19" viewBox="0 0 19 19">
<rect x="0.5" y="0.5" width="18" height="18" fill="#eaf2fb" stroke="#4f6f9a"/>
<path d="M4 4.5h11M4.5 4.5l5 11 5-11M7 10h5" fill="none" stroke="#3f5f90" stroke-width="2.2"/></svg>
<div class="a" style="left:1px;top:230px;width:804px;height:31px;background:#bfcddb"></div>
<div class="a" style="left:812px;top:230px;width:804px;height:31px;background:#bfcddb"></div>
<div class="t" style="left:5.70px;top:238px;;transform:scaleX(0.9598);transform-origin:0 0">C:\Users\</div>
<div class="a" style="left:79px;top:244px;width:68px;height:10px;background:linear-gradient(90deg,#7d8590,#8b929c 30%,#8e96a0 60%,#868e99 80%,#7e8792)"></div>
<div class="a" style="left:79px;top:244px;width:24px;height:4px;background:#7a828c"></div>
<div class="a" style="left:103px;top:254px;width:10px;height:3px;background:#98a0aa"></div>
<div class="a" style="left:138px;top:254px;width:8px;height:3px;background:#9aa2ac"></div>
<div class="t" style="left:149.70px;top:238px;;transform:scaleX(1.0061);transform-origin:0 0">\Desktop\Personal\</div>
<div class="t" style="left:818px;top:238px;">/</div>
<div class="a" style="left:1px;top:261px;width:804px;height:610px;background:#fff;border:1px solid #8c8c8c;border-right-color:#8c8c8c"></div>
<div class="a" style="left:812px;top:261px;width:805px;height:610px;background:#fff;border:1px solid #8c8c8c"></div>
<div class="a" style="left:815px;top:292px;width:1px;height:577px;background:#dfe6ee"></div>
<div class="a" style="left:4px;top:292px;width:1px;height:577px;background:#eef1f5"></div>
<div class="a" style="left:228px;top:263px;width:1px;height:607px;background:#efefef"></div>
<div class="a" style="left:333px;top:263px;width:1px;height:607px;background:#efefef"></div>
<div class="a" style="left:512px;top:263px;width:1px;height:607px;background:#efefef"></div>
<div class="a" style="left:738px;top:263px;width:1px;height:607px;background:#efefef"></div>
<div class="a" style="left:1038px;top:263px;width:1px;height:607px;background:#efefef"></div>
<div class="a" style="left:1143px;top:263px;width:1px;height:607px;background:#efefef"></div>
<div class="a" style="left:1368px;top:263px;width:1px;height:607px;background:#efefef"></div>
<div class="a" style="left:1488px;top:263px;width:1px;height:607px;background:#efefef"></div>
<div class="a" style="left:1580px;top:263px;width:1px;height:607px;background:#efefef"></div>
<div class="t" style="left:9.70px;top:272px;;transform:scaleX(0.9788);transform-origin:0 0">Name</div>
<div class="t" style="right:1289.30px;top:272px;;transform:scaleX(0.8853);transform-origin:100% 0">Size</div>
<div class="t" style="left:338.70px;top:272px;;transform:scaleX(0.9736);transform-origin:0 0">Type</div>
<div class="t" style="left:518.70px;top:272px;;transform:scaleX(0.9852);transform-origin:0 0">Changed</div>
<svg class="a" style="left:109px;top:264px" width="13" height="7" viewBox="0 0 13 7"><path d="M0.5 6.5L6.5 0.5L12.5 6.5" fill="none" stroke="#6a6a6a" stroke-width="1.2"/></svg>
<div class="t" style="left:820.70px;top:272px;;transform:scaleX(0.9788);transform-origin:0 0">Name</div>
<div class="t" style="right:478.30px;top:272px;;transform:scaleX(0.8853);transform-origin:100% 0">Size</div>
<div class="t" style="left:1149.70px;top:272px;;transform:scaleX(0.9852);transform-origin:0 0">Changed</div>
<div class="t" style="left:1374.70px;top:272px;;transform:scaleX(0.9798);transform-origin:0 0">Rights</div>
<div class="t" style="left:1494.70px;top:272px;;transform:scaleX(0.9808);transform-origin:0 0">Owner</div>
<svg class="a" style="left:920px;top:264px" width="13" height="7" viewBox="0 0 13 7"><path d="M0.5 6.5L6.5 0.5L12.5 6.5" fill="none" stroke="#6a6a6a" stroke-width="1.2"/></svg>
<svg class="a" style="left:10px;top:298px" width="16" height="19" viewBox="0 0 16 19">
<rect x="2" y="0" width="11" height="17" fill="#f2cf55"/>
<rect x="5" y="0" width="8" height="17" fill="#f7de7f"/>
<path d="M2 17.5h12M2.5 18V10M0.5 12.5l2-3 2 3" fill="none" stroke="#3a3020" stroke-width="2"/></svg>
<div class="t" style="left:33px;top:301px;">..</div>
<div class="t" style="left:338.70px;top:301px;;transform:scaleX(0.9838);transform-origin:0 0">Parent directory</div>
<div class="t" style="left:518.70px;top:301px;;transform:scaleX(1.0365);transform-origin:0 0">9/15/2019</div>
<div class="t" style="left:613.70px;top:301px;;transform:scaleX(0.9893);transform-origin:0 0">10:25:20 AM</div>
<svg class="a" style="left:11px;top:328px" width="15" height="19" viewBox="0 0 15 19">
<rect x="1" y="0" width="12" height="18" fill="#f2cf55"/>
<rect x="4" y="1" width="6" height="16" fill="#f8e08a"/>
<rect x="1" y="0" width="12" height="18" fill="none" stroke="#f5e6b0" stroke-width="1"/></svg>
<svg class="a" style="left:32px;top:328px" width="126" height="25" viewBox="0 0 126 25"><rect x="0.0" y="5" width="5.3" height="5.3" fill="rgb(151,151,150)"/><rect x="0.0" y="10" width="5.3" height="5.3" fill="rgb(207,207,216)"/><rect x="0.0" y="15" width="5.3" height="5.3" fill="rgb(180,180,176)"/><rect x="5.0" y="0" width="5.3" height="5.3" fill="rgb(190,190,197)"/><rect x="5.0" y="10" width="5.3" height="5.3" fill="rgb(162,162,167)"/><rect x="5.0" y="15" width="5.3" height="5.3" fill="rgb(213,213,213)"/><rect x="10.0" y="0" width="5.3" height="5.3" fill="rgb(186,186,192)"/><rect x="10.0" y="5" width="5.3" height="5.3" fill="rgb(196,196,194)"/><rect x="10.0" y="10" width="5.3" height="5.3" fill="rgb(175,175,178)"/><rect x="10.0" y="15" width="5.3" height="5.3" fill="rgb(165,165,170)"/><rect x="10.0" y="20" width="5.3" height="5.3" fill="rgb(193,193,192)"/><rect x="15.0" y="5" width="5.3" height="5.3" fill="rgb(196,196,204)"/><rect x="15.0" y="10" width="5.3" height="5.3" fill="rgb(185,185,191)"/><rect x="15.0" y="15" width="5.3" height="5.3" fill="rgb(215,215,218)"/><rect x="20.0" y="5" width="5.3" height="5.3" fill="rgb(170,170,179)"/><rect x="20.0" y="10" width="5.3" height="5.3" fill="rgb(197,197,196)"/><rect x="20.0" y="15" width="5.3" height="5.3" fill="rgb(223,223,223)"/><rect x="25.0" y="5" width="5.3" height="5.3" fill="rgb(160,160,158)"/><rect x="25.0" y="10" width="5.3" height="5.3" fill="rgb(192,192,202)"/><rect x="25.0" y="15" width="5.3" height="5.3" fill="rgb(174,174,182)"/><rect x="30.0" y="10" width="5.3" height="5.3" fill="rgb(189,189,191)"/><rect x="35.0" y="5" width="5.3" height="5.3" fill="rgb(216,216,214)"/><rect x="35.0" y="10" width="5.3" height="5.3" fill="rgb(179,179,182)"/><rect x="35.0" y="15" width="5.3" height="5.3" fill="rgb(182,182,190)"/><rect x="40.0" y="5" width="5.3" height="5.3" fill="rgb(178,178,174)"/><rect x="40.0" y="10" width="5.3" height="5.3" fill="rgb(150,150,151)"/><rect x="45.0" y="0" width="5.3" height="5.3" fill="rgb(200,200,205)"/><rect x="45.0" y="5" width="5.3" height="5.3" fill="rgb(213,213,219)"/><rect x="45.0" y="10" width="5.3" height="5.3" fill="rgb(212,212,222)"/><rect x="45.0" y="15" width="5.3" height="5.3" fill="rgb(221,221,226)"/><rect x="50.0" y="0" width="5.3" height="5.3" fill="rgb(218,218,221)"/><rect x="50.0" y="5" width="5.3" height="5.3" fill="rgb(167,167,169)"/><rect x="50.0" y="10" width="5.3" height="5.3" fill="rgb(189,189,193)"/><rect x="50.0" y="15" width="5.3" height="5.3" fill="rgb(181,181,185)"/><rect x="55.0" y="5" width="5.3" height="5.3" fill="rgb(154,154,163)"/><rect x="55.0" y="10" width="5.3" height="5.3" fill="rgb(213,213,210)"/><rect x="55.0" y="15" width="5.3" height="5.3" fill="rgb(171,171,169)"/><rect x="60.0" y="10" width="5.3" height="5.3" fill="rgb(203,203,212)"/><rect x="60.0" y="15" width="5.3" height="5.3" fill="rgb(224,224,234)"/><rect x="65.0" y="5" width="5.3" height="5.3" fill="rgb(208,208,210)"/><rect x="65.0" y="10" width="5.3" height="5.3" fill="rgb(211,211,221)"/><rect x="65.0" y="15" width="5.3" height="5.3" fill="rgb(190,190,191)"/><rect x="70.0" y="5" width="5.3" height="5.3" fill="rgb(211,211,207)"/><rect x="70.0" y="10" width="5.3" height="5.3" fill="rgb(182,182,184)"/><rect x="75.0" y="0" width="5.3" height="5.3" fill="rgb(180,180,176)"/><rect x="75.0" y="5" width="5.3" height="5.3" fill="rgb(220,220,228)"/><rect x="75.0" y="15" width="5.3" height="5.3" fill="rgb(196,196,194)"/><rect x="80.0" y="0" width="5.3" height="5.3" fill="rgb(213,213,215)"/><rect x="80.0" y="10" width="5.3" height="5.3" fill="rgb(189,189,187)"/><rect x="80.0" y="15" width="5.3" height="5.3" fill="rgb(184,184,186)"/><rect x="85.0" y="0" width="5.3" height="5.3" fill="rgb(194,194,204)"/><rect x="85.0" y="10" width="5.3" height="5.3" fill="rgb(211,211,218)"/><rect x="85.0" y="15" width="5.3" height="5.3" fill="rgb(186,186,186)"/><rect x="90.0" y="0" width="5.3" height="5.3" fill="rgb(225,225,231)"/><rect x="90.0" y="5" width="5.3" height="5.3" fill="rgb(204,204,209)"/><rect x="90.0" y="10" width="5.3" height="5.3" fill="rgb(193,193,202)"/><rect x="95.0" y="5" width="5.3" height="5.3" fill="rgb(157,157,158)"/><rect x="95.0" y="10" width="5.3" height="5.3" fill="rgb(203,203,205)"/><rect x="100.0" y="0" width="5.3" height="5.3" fill="rgb(219,219,219)"/><rect x="100.0" y="5" width="5.3" height="5.3" fill="rgb(214,214,224)"/><rect x="100.0" y="10" width="5.3" height="5.3" fill="rgb(201,201,207)"/><rect x="100.0" y="15" width="5.3" height="5.3" fill="rgb(195,195,198)"/><rect x="105.0" y="5" width="5.3" height="5.3" fill="rgb(160,160,167)"/><rect x="105.0" y="10" width="5.3" height="5.3" fill="rgb(191,191,199)"/><rect x="110.0" y="0" width="5.3" height="5.3" fill="rgb(213,213,215)"/><rect x="110.0" y="5" width="5.3" height="5.3" fill="rgb(158,158,163)"/><rect x="110.0" y="10" width="5.3" height="5.3" fill="rgb(184,184,180)"/><rect x="110.0" y="15" width="5.3" height="5.3" fill="rgb(201,201,198)"/><rect x="115.0" y="5" width="5.3" height="5.3" fill="rgb(173,173,172)"/><rect x="115.0" y="10" width="5.3" height="5.3" fill="rgb(157,157,161)"/><rect x="120.0" y="0" width="5.3" height="5.3" fill="rgb(222,222,219)"/><rect x="120.0" y="10" width="5.3" height="5.3" fill="rgb(201,201,211)"/></svg>
<div class="t" style="left:338.70px;top:330px;;transform:scaleX(0.9870);transform-origin:0 0">File folder</div>
<div class="t" style="left:518.70px;top:330px;;transform:scaleX(1.0365);transform-origin:0 0">4/20/2019</div>
<div class="t" style="left:612.70px;top:330px;;transform:scaleX(0.9991);transform-origin:0 0">9:34:22 AM</div>
<svg class="a" style="left:11px;top:357px" width="15" height="19" viewBox="0 0 15 19">
<rect x="1" y="0" width="12" height="18" fill="#f2cf55"/>
<rect x="4" y="1" width="6" height="16" fill="#f8e08a"/>
<rect x="1" y="0" width="12" height="18" fill="none" stroke="#f5e6b0" stroke-width="1"/></svg>
<svg class="a" style="left:32px;top:357px" width="31" height="25" viewBox="0 0 31 25"><rect x="0.0" y="5" width="5.3" height="5.3" fill="rgb(196,196,196)"/><rect x="0.0" y="10" width="5.3" height="5.3" fill="rgb(214,214,220)"/><rect x="0.0" y="15" width="5.3" height="5.3" fill="rgb(163,163,162)"/><rect x="5.0" y="5" width="5.3" height="5.3" fill="rgb(214,214,222)"/><rect x="5.0" y="10" width="5.3" height="5.3" fill="rgb(196,196,194)"/><rect x="10.0" y="5" width="5.3" height="5.3" fill="rgb(169,169,179)"/><rect x="10.0" y="10" width="5.3" height="5.3" fill="rgb(171,171,172)"/><rect x="10.0" y="15" width="5.3" height="5.3" fill="rgb(168,168,168)"/><rect x="15.0" y="5" width="5.3" height="5.3" fill="rgb(168,168,174)"/><rect x="15.0" y="10" width="5.3" height="5.3" fill="rgb(209,209,219)"/><rect x="15.0" y="15" width="5.3" height="5.3" fill="rgb(215,215,216)"/><rect x="20.0" y="5" width="5.3" height="5.3" fill="rgb(156,156,159)"/><rect x="20.0" y="10" width="5.3" height="5.3" fill="rgb(145,145,154)"/><rect x="20.0" y="15" width="5.3" height="5.3" fill="rgb(174,174,178)"/><rect x="25.0" y="0" width="5.3" height="5.3" fill="rgb(198,198,194)"/><rect x="25.0" y="5" width="5.3" height="5.3" fill="rgb(185,185,184)"/><rect x="25.0" y="10" width="5.3" height="5.3" fill="rgb(213,213,217)"/></svg>
<div class="t" style="left:338.70px;top:359px;;transform:scaleX(0.9870);transform-origin:0 0">File folder</div>
<div class="t" style="left:518.70px;top:359px;;transform:scaleX(1.0365);transform-origin:0 0">8/10/2019</div>
<div class="t" style="left:612.70px;top:359px;;transform:scaleX(0.9667);transform-origin:0 0">9:46:51 PM</div>
<svg class="a" style="left:11px;top:386px" width="15" height="19" viewBox="0 0 15 19">
<rect x="1" y="0" width="12" height="18" fill="#f2cf55"/>
<rect x="4" y="1" width="6" height="16" fill="#f8e08a"/>
<rect x="1" y="0" width="12" height="18" fill="none" stroke="#f5e6b0" stroke-width="1"/></svg>
<svg class="a" style="left:32px;top:386px" width="161" height="25" viewBox="0 0 161 25"><rect x="0.0" y="5" width="5.3" height="5.3" fill="rgb(173,173,172)"/><rect x="0.0" y="15" width="5.3" height="5.3" fill="rgb(171,171,178)"/><rect x="5.0" y="0" width="5.3" height="5.3" fill="rgb(220,220,220)"/><rect x="5.0" y="5" width="5.3" height="5.3" fill="rgb(151,151,154)"/><rect x="5.0" y="10" width="5.3" height="5.3" fill="rgb(159,159,155)"/><rect x="5.0" y="15" width="5.3" height="5.3" fill="rgb(222,222,229)"/><rect x="10.0" y="5" width="5.3" height="5.3" fill="rgb(160,160,166)"/><rect x="10.0" y="10" width="5.3" height="5.3" fill="rgb(165,165,171)"/><rect x="10.0" y="15" width="5.3" height="5.3" fill="rgb(199,199,196)"/><rect x="15.0" y="5" width="5.3" height="5.3" fill="rgb(177,177,178)"/><rect x="15.0" y="10" width="5.3" height="5.3" fill="rgb(153,153,153)"/><rect x="15.0" y="15" width="5.3" height="5.3" fill="rgb(179,179,188)"/><rect x="20.0" y="5" width="5.3" height="5.3" fill="rgb(185,185,195)"/><rect x="20.0" y="10" width="5.3" height="5.3" fill="rgb(208,208,216)"/><rect x="20.0" y="15" width="5.3" height="5.3" fill="rgb(178,178,179)"/><rect x="25.0" y="10" width="5.3" height="5.3" fill="rgb(209,209,209)"/><rect x="30.0" y="5" width="5.3" height="5.3" fill="rgb(167,167,167)"/><rect x="30.0" y="10" width="5.3" height="5.3" fill="rgb(214,214,220)"/><rect x="30.0" y="15" width="5.3" height="5.3" fill="rgb(186,186,194)"/><rect x="35.0" y="0" width="5.3" height="5.3" fill="rgb(198,198,207)"/><rect x="35.0" y="5" width="5.3" height="5.3" fill="rgb(173,173,180)"/><rect x="35.0" y="10" width="5.3" height="5.3" fill="rgb(200,200,201)"/><rect x="40.0" y="5" width="5.3" height="5.3" fill="rgb(207,207,214)"/><rect x="40.0" y="10" width="5.3" height="5.3" fill="rgb(202,202,210)"/><rect x="40.0" y="20" width="5.3" height="5.3" fill="rgb(205,205,212)"/><rect x="45.0" y="5" width="5.3" height="5.3" fill="rgb(213,213,218)"/><rect x="45.0" y="10" width="5.3" height="5.3" fill="rgb(195,195,204)"/><rect x="45.0" y="15" width="5.3" height="5.3" fill="rgb(198,198,199)"/><rect x="50.0" y="0" width="5.3" height="5.3" fill="rgb(179,179,187)"/><rect x="50.0" y="5" width="5.3" height="5.3" fill="rgb(152,152,162)"/><rect x="50.0" y="10" width="5.3" height="5.3" fill="rgb(214,214,210)"/><rect x="50.0" y="15" width="5.3" height="5.3" fill="rgb(213,213,215)"/><rect x="55.0" y="5" width="5.3" height="5.3" fill="rgb(198,198,204)"/><rect x="55.0" y="10" width="5.3" height="5.3" fill="rgb(185,185,194)"/><rect x="60.0" y="0" width="5.3" height="5.3" fill="rgb(204,204,212)"/><rect x="60.0" y="5" width="5.3" height="5.3" fill="rgb(179,179,188)"/><rect x="60.0" y="10" width="5.3" height="5.3" fill="rgb(172,172,175)"/><rect x="60.0" y="15" width="5.3" height="5.3" fill="rgb(166,166,163)"/><rect x="65.0" y="0" width="5.3" height="5.3" fill="rgb(176,176,180)"/><rect x="65.0" y="10" width="5.3" height="5.3" fill="rgb(168,168,178)"/><rect x="65.0" y="15" width="5.3" height="5.3" fill="rgb(199,199,196)"/><rect x="70.0" y="0" width="5.3" height="5.3" fill="rgb(224,224,228)"/><rect x="70.0" y="5" width="5.3" height="5.3" fill="rgb(216,216,219)"/><rect x="70.0" y="10" width="5.3" height="5.3" fill="rgb(184,184,184)"/><rect x="70.0" y="15" width="5.3" height="5.3" fill="rgb(218,218,221)"/><rect x="75.0" y="10" width="5.3" height="5.3" fill="rgb(164,164,165)"/><rect x="75.0" y="15" width="5.3" height="5.3" fill="rgb(179,179,177)"/><rect x="80.0" y="5" width="5.3" height="5.3" fill="rgb(179,179,185)"/><rect x="80.0" y="10" width="5.3" height="5.3" fill="rgb(176,176,173)"/><rect x="80.0" y="15" width="5.3" height="5.3" fill="rgb(190,190,200)"/><rect x="85.0" y="0" width="5.3" height="5.3" fill="rgb(188,188,190)"/><rect x="85.0" y="10" width="5.3" height="5.3" fill="rgb(205,205,210)"/><rect x="85.0" y="15" width="5.3" height="5.3" fill="rgb(218,218,225)"/><rect x="90.0" y="10" width="5.3" height="5.3" fill="rgb(169,169,176)"/><rect x="90.0" y="20" width="5.3" height="5.3" fill="rgb(202,202,202)"/><rect x="95.0" y="5" width="5.3" height="5.3" fill="rgb(180,180,190)"/><rect x="95.0" y="10" width="5.3" height="5.3" fill="rgb(175,175,175)"/><rect x="100.0" y="5" width="5.3" height="5.3" fill="rgb(187,187,197)"/><rect x="100.0" y="10" width="5.3" height="5.3" fill="rgb(174,174,182)"/><rect x="105.0" y="5" width="5.3" height="5.3" fill="rgb(160,160,161)"/><rect x="105.0" y="10" width="5.3" height="5.3" fill="rgb(202,202,203)"/><rect x="110.0" y="5" width="5.3" height="5.3" fill="rgb(170,170,174)"/><rect x="110.0" y="10" width="5.3" height="5.3" fill="rgb(183,183,189)"/><rect x="115.0" y="5" width="5.3" height="5.3" fill="rgb(175,175,185)"/><rect x="115.0" y="10" width="5.3" height="5.3" fill="rgb(172,172,173)"/><rect x="115.0" y="15" width="5.3" height="5.3" fill="rgb(174,174,180)"/><rect x="120.0" y="5" width="5.3" height="5.3" fill="rgb(197,197,195)"/><rect x="120.0" y="10" width="5.3" height="5.3" fill="rgb(202,202,202)"/><rect x="125.0" y="5" width="5.3" height="5.3" fill="rgb(152,152,162)"/><rect x="125.0" y="10" width="5.3" height="5.3" fill="rgb(175,175,178)"/><rect x="130.0" y="10" width="5.3" height="5.3" fill="rgb(162,162,172)"/><rect x="130.0" y="15" width="5.3" height="5.3" fill="rgb(189,189,198)"/><rect x="135.0" y="5" width="5.3" height="5.3" fill="rgb(164,164,165)"/><rect x="135.0" y="10" width="5.3" height="5.3" fill="rgb(167,167,173)"/><rect x="135.0" y="15" width="5.3" height="5.3" fill="rgb(189,189,194)"/><rect x="140.0" y="0" width="5.3" height="5.3" fill="rgb(201,201,200)"/><rect x="140.0" y="10" width="5.3" height="5.3" fill="rgb(205,205,207)"/><rect x="140.0" y="15" width="5.3" height="5.3" fill="rgb(219,219,223)"/><rect x="145.0" y="0" width="5.3" height="5.3" fill="rgb(228,228,235)"/><rect x="145.0" y="5" width="5.3" height="5.3" fill="rgb(181,181,187)"/><rect x="145.0" y="10" width="5.3" height="5.3" fill="rgb(145,145,145)"/><rect x="150.0" y="0" width="5.3" height="5.3" fill="rgb(208,208,212)"/><rect x="150.0" y="5" width="5.3" height="5.3" fill="rgb(181,181,188)"/><rect x="150.0" y="15" width="5.3" height="5.3" fill="rgb(200,200,205)"/><rect x="155.0" y="0" width="5.3" height="5.3" fill="rgb(213,213,222)"/><rect x="155.0" y="10" width="5.3" height="5.3" fill="rgb(150,150,148)"/><rect x="155.0" y="15" width="5.3" height="5.3" fill="rgb(203,203,209)"/></svg>
<div class="t" style="left:338.70px;top:388px;;transform:scaleX(0.9870);transform-origin:0 0">File folder</div>
<div class="t" style="left:518.70px;top:388px;;transform:scaleX(1.0365);transform-origin:0 0">6/24/2019</div>
<div class="t" style="left:612.70px;top:388px;;transform:scaleX(0.9667);transform-origin:0 0">2:12:17 PM</div>
<svg class="a" style="left:11px;top:415px" width="15" height="19" viewBox="0 0 15 19">
<rect x="1" y="0" width="12" height="18" fill="#f2cf55"/>
<rect x="4" y="1" width="6" height="16" fill="#f8e08a"/>
<rect x="1" y="0" width="12" height="18" fill="none" stroke="#f5e6b0" stroke-width="1"/></svg>
<svg class="a" style="left:32px;top:415px" width="176" height="25" viewBox="0 0 176 25"><rect x="0.0" y="0" width="5.3" height="5.3" fill="rgb(182,182,190)"/><rect x="0.0" y="5" width="5.3" height="5.3" fill="rgb(155,155,153)"/><rect x="0.0" y="15" width="5.3" height="5.3" fill="rgb(177,177,175)"/><rect x="5.0" y="0" width="5.3" height="5.3" fill="rgb(178,178,176)"/><rect x="5.0" y="5" width="5.3" height="5.3" fill="rgb(207,207,211)"/><rect x="5.0" y="10" width="5.3" height="5.3" fill="rgb(156,156,153)"/><rect x="5.0" y="15" width="5.3" height="5.3" fill="rgb(211,211,212)"/><rect x="10.0" y="0" width="5.3" height="5.3" fill="rgb(198,198,203)"/><rect x="10.0" y="10" width="5.3" height="5.3" fill="rgb(172,172,174)"/><rect x="10.0" y="15" width="5.3" height="5.3" fill="rgb(167,167,163)"/><rect x="15.0" y="5" width="5.3" height="5.3" fill="rgb(198,198,194)"/><rect x="15.0" y="10" width="5.3" height="5.3" fill="rgb(212,212,221)"/><rect x="15.0" y="15" width="5.3" height="5.3" fill="rgb(187,187,186)"/><rect x="20.0" y="5" width="5.3" height="5.3" fill="rgb(178,178,181)"/><rect x="20.0" y="10" width="5.3" height="5.3" fill="rgb(188,188,188)"/><rect x="20.0" y="15" width="5.3" height="5.3" fill="rgb(210,210,213)"/><rect x="30.0" y="0" width="5.3" height="5.3" fill="rgb(186,186,190)"/><rect x="30.0" y="5" width="5.3" height="5.3" fill="rgb(219,219,228)"/><rect x="30.0" y="10" width="5.3" height="5.3" fill="rgb(156,156,154)"/><rect x="30.0" y="15" width="5.3" height="5.3" fill="rgb(207,207,214)"/><rect x="35.0" y="5" width="5.3" height="5.3" fill="rgb(189,189,195)"/><rect x="35.0" y="10" width="5.3" height="5.3" fill="rgb(170,170,167)"/><rect x="35.0" y="15" width="5.3" height="5.3" fill="rgb(202,202,205)"/><rect x="40.0" y="0" width="5.3" height="5.3" fill="rgb(220,220,217)"/><rect x="40.0" y="5" width="5.3" height="5.3" fill="rgb(165,165,164)"/><rect x="40.0" y="10" width="5.3" height="5.3" fill="rgb(165,165,172)"/><rect x="45.0" y="0" width="5.3" height="5.3" fill="rgb(214,214,222)"/><rect x="45.0" y="5" width="5.3" height="5.3" fill="rgb(197,197,202)"/><rect x="45.0" y="10" width="5.3" height="5.3" fill="rgb(149,149,158)"/><rect x="45.0" y="15" width="5.3" height="5.3" fill="rgb(177,177,185)"/><rect x="50.0" y="10" width="5.3" height="5.3" fill="rgb(177,177,180)"/><rect x="55.0" y="0" width="5.3" height="5.3" fill="rgb(175,175,172)"/><rect x="55.0" y="5" width="5.3" height="5.3" fill="rgb(186,186,189)"/><rect x="55.0" y="10" width="5.3" height="5.3" fill="rgb(150,150,148)"/><rect x="55.0" y="15" width="5.3" height="5.3" fill="rgb(166,166,176)"/><rect x="60.0" y="0" width="5.3" height="5.3" fill="rgb(187,187,196)"/><rect x="60.0" y="5" width="5.3" height="5.3" fill="rgb(173,173,177)"/><rect x="60.0" y="10" width="5.3" height="5.3" fill="rgb(210,210,214)"/><rect x="65.0" y="0" width="5.3" height="5.3" fill="rgb(187,187,194)"/><rect x="65.0" y="5" width="5.3" height="5.3" fill="rgb(189,189,196)"/><rect x="65.0" y="10" width="5.3" height="5.3" fill="rgb(186,186,184)"/><rect x="65.0" y="15" width="5.3" height="5.3" fill="rgb(204,204,211)"/><rect x="70.0" y="0" width="5.3" height="5.3" fill="rgb(199,199,204)"/><rect x="70.0" y="5" width="5.3" height="5.3" fill="rgb(155,155,164)"/><rect x="70.0" y="10" width="5.3" height="5.3" fill="rgb(199,199,198)"/><rect x="70.0" y="15" width="5.3" height="5.3" fill="rgb(208,208,218)"/><rect x="75.0" y="5" width="5.3" height="5.3" fill="rgb(219,219,224)"/><rect x="75.0" y="10" width="5.3" height="5.3" fill="rgb(179,179,186)"/><rect x="75.0" y="20" width="5.3" height="5.3" fill="rgb(215,215,220)"/><rect x="80.0" y="5" width="5.3" height="5.3" fill="rgb(218,218,217)"/><rect x="80.0" y="10" width="5.3" height="5.3" fill="rgb(191,191,190)"/><rect x="80.0" y="15" width="5.3" height="5.3" fill="rgb(216,216,218)"/><rect x="85.0" y="0" width="5.3" height="5.3" fill="rgb(195,195,196)"/><rect x="85.0" y="5" width="5.3" height="5.3" fill="rgb(197,197,194)"/><rect x="85.0" y="10" width="5.3" height="5.3" fill="rgb(153,153,152)"/><rect x="90.0" y="5" width="5.3" height="5.3" fill="rgb(185,185,191)"/><rect x="90.0" y="10" width="5.3" height="5.3" fill="rgb(149,149,146)"/><rect x="90.0" y="15" width="5.3" height="5.3" fill="rgb(198,198,206)"/><rect x="95.0" y="0" width="5.3" height="5.3" fill="rgb(175,175,175)"/><rect x="95.0" y="5" width="5.3" height="5.3" fill="rgb(186,186,186)"/><rect x="95.0" y="10" width="5.3" height="5.3" fill="rgb(176,176,181)"/><rect x="95.0" y="15" width="5.3" height="5.3" fill="rgb(189,189,188)"/><rect x="100.0" y="5" width="5.3" height="5.3" fill="rgb(190,190,199)"/><rect x="100.0" y="10" width="5.3" height="5.3" fill="rgb(169,169,165)"/><rect x="100.0" y="15" width="5.3" height="5.3" fill="rgb(223,223,223)"/><rect x="105.0" y="5" width="5.3" height="5.3" fill="rgb(189,189,197)"/><rect x="105.0" y="10" width="5.3" height="5.3" fill="rgb(172,172,176)"/><rect x="110.0" y="0" width="5.3" height="5.3" fill="rgb(211,211,210)"/><rect x="110.0" y="10" width="5.3" height="5.3" fill="rgb(197,197,203)"/><rect x="115.0" y="0" width="5.3" height="5.3" fill="rgb(210,210,206)"/><rect x="115.0" y="5" width="5.3" height="5.3" fill="rgb(212,212,220)"/><rect x="115.0" y="15" width="5.3" height="5.3" fill="rgb(166,166,166)"/><rect x="120.0" y="0" width="5.3" height="5.3" fill="rgb(201,201,200)"/><rect x="120.0" y="5" width="5.3" height="5.3" fill="rgb(206,206,210)"/><rect x="120.0" y="10" width="5.3" height="5.3" fill="rgb(147,147,150)"/><rect x="125.0" y="5" width="5.3" height="5.3" fill="rgb(150,150,160)"/><rect x="125.0" y="10" width="5.3" height="5.3" fill="rgb(188,188,187)"/><rect x="125.0" y="15" width="5.3" height="5.3" fill="rgb(171,171,174)"/><rect x="130.0" y="0" width="5.3" height="5.3" fill="rgb(211,211,213)"/><rect x="130.0" y="10" width="5.3" height="5.3" fill="rgb(194,194,193)"/><rect x="130.0" y="15" width="5.3" height="5.3" fill="rgb(167,167,173)"/><rect x="135.0" y="5" width="5.3" height="5.3" fill="rgb(202,202,205)"/><rect x="135.0" y="10" width="5.3" height="5.3" fill="rgb(162,162,171)"/><rect x="140.0" y="5" width="5.3" height="5.3" fill="rgb(190,190,192)"/><rect x="140.0" y="10" width="5.3" height="5.3" fill="rgb(177,177,185)"/><rect x="140.0" y="15" width="5.3" height="5.3" fill="rgb(167,167,165)"/><rect x="145.0" y="0" width="5.3" height="5.3" fill="rgb(220,220,229)"/><rect x="145.0" y="5" width="5.3" height="5.3" fill="rgb(198,198,201)"/><rect x="145.0" y="10" width="5.3" height="5.3" fill="rgb(188,188,189)"/><rect x="150.0" y="0" width="5.3" height="5.3" fill="rgb(192,192,197)"/><rect x="150.0" y="5" width="5.3" height="5.3" fill="rgb(203,203,204)"/><rect x="150.0" y="10" width="5.3" height="5.3" fill="rgb(173,173,183)"/><rect x="150.0" y="15" width="5.3" height="5.3" fill="rgb(181,181,178)"/><rect x="155.0" y="0" width="5.3" height="5.3" fill="rgb(225,225,225)"/><rect x="155.0" y="5" width="5.3" height="5.3" fill="rgb(207,207,209)"/><rect x="155.0" y="10" width="5.3" height="5.3" fill="rgb(210,210,207)"/><rect x="155.0" y="15" width="5.3" height="5.3" fill="rgb(222,222,225)"/><rect x="160.0" y="5" width="5.3" height="5.3" fill="rgb(157,157,157)"/><rect x="160.0" y="10" width="5.3" height="5.3" fill="rgb(185,185,194)"/><rect x="165.0" y="5" width="5.3" height="5.3" fill="rgb(179,179,183)"/><rect x="165.0" y="10" width="5.3" height="5.3" fill="rgb(167,167,167)"/><rect x="165.0" y="15" width="5.3" height="5.3" fill="rgb(198,198,206)"/><rect x="170.0" y="5" width="5.3" height="5.3" fill="rgb(183,183,190)"/><rect x="170.0" y="10" width="5.3" height="5.3" fill="rgb(166,166,164)"/><rect x="170.0" y="15" width="5.3" height="5.3" fill="rgb(178,178,181)"/></svg>
<div class="t" style="left:338.70px;top:417px;;transform:scaleX(0.9870);transform-origin:0 0">File folder</div>
<div class="t" style="left:518.70px;top:417px;;transform:scaleX(1.0365);transform-origin:0 0">8/12/2019</div>
<div class="t" style="left:612.70px;top:417px;;transform:scaleX(0.9667);transform-origin:0 0">7:25:25 PM</div>
<svg class="a" style="left:11px;top:444px" width="15" height="19" viewBox="0 0 15 19">
<rect x="1" y="0" width="12" height="18" fill="#f2cf55"/>
<rect x="4" y="1" width="6" height="16" fill="#f8e08a"/>
<rect x="1" y="0" width="12" height="18" fill="none" stroke="#f5e6b0" stroke-width="1"/></svg>
<svg class="a" style="left:32px;top:444px" width="91" height="25" viewBox="0 0 91 25"><rect x="0.0" y="5" width="5.3" height="5.3" fill="rgb(163,163,160)"/><rect x="0.0" y="10" width="5.3" height="5.3" fill="rgb(204,204,205)"/><rect x="0.0" y="15" width="5.3" height="5.3" fill="rgb(181,181,186)"/><rect x="5.0" y="0" width="5.3" height="5.3" fill="rgb(196,196,201)"/><rect x="5.0" y="5" width="5.3" height="5.3" fill="rgb(210,210,218)"/><rect x="5.0" y="10" width="5.3" height="5.3" fill="rgb(173,173,183)"/><rect x="5.0" y="15" width="5.3" height="5.3" fill="rgb(222,222,220)"/><rect x="10.0" y="0" width="5.3" height="5.3" fill="rgb(199,199,200)"/><rect x="10.0" y="5" width="5.3" height="5.3" fill="rgb(214,214,210)"/><rect x="10.0" y="10" width="5.3" height="5.3" fill="rgb(158,158,158)"/><rect x="10.0" y="15" width="5.3" height="5.3" fill="rgb(176,176,186)"/><rect x="15.0" y="0" width="5.3" height="5.3" fill="rgb(200,200,200)"/><rect x="15.0" y="5" width="5.3" height="5.3" fill="rgb(195,195,198)"/><rect x="15.0" y="15" width="5.3" height="5.3" fill="rgb(193,193,191)"/><rect x="20.0" y="5" width="5.3" height="5.3" fill="rgb(197,197,194)"/><rect x="20.0" y="10" width="5.3" height="5.3" fill="rgb(176,176,176)"/><rect x="20.0" y="20" width="5.3" height="5.3" fill="rgb(212,212,222)"/><rect x="25.0" y="5" width="5.3" height="5.3" fill="rgb(158,158,154)"/><rect x="30.0" y="10" width="5.3" height="5.3" fill="rgb(149,149,148)"/><rect x="30.0" y="15" width="5.3" height="5.3" fill="rgb(216,216,226)"/><rect x="35.0" y="0" width="5.3" height="5.3" fill="rgb(212,212,208)"/><rect x="35.0" y="5" width="5.3" height="5.3" fill="rgb(150,150,148)"/><rect x="35.0" y="10" width="5.3" height="5.3" fill="rgb(211,211,220)"/><rect x="40.0" y="5" width="5.3" height="5.3" fill="rgb(154,154,155)"/><rect x="40.0" y="10" width="5.3" height="5.3" fill="rgb(148,148,156)"/><rect x="40.0" y="15" width="5.3" height="5.3" fill="rgb(186,186,186)"/><rect x="45.0" y="5" width="5.3" height="5.3" fill="rgb(188,188,195)"/><rect x="45.0" y="10" width="5.3" height="5.3" fill="rgb(150,150,147)"/><rect x="45.0" y="15" width="5.3" height="5.3" fill="rgb(169,169,173)"/><rect x="50.0" y="5" width="5.3" height="5.3" fill="rgb(150,150,158)"/><rect x="50.0" y="10" width="5.3" height="5.3" fill="rgb(197,197,207)"/><rect x="50.0" y="15" width="5.3" height="5.3" fill="rgb(216,216,217)"/><rect x="55.0" y="5" width="5.3" height="5.3" fill="rgb(191,191,196)"/><rect x="55.0" y="10" width="5.3" height="5.3" fill="rgb(166,166,162)"/><rect x="55.0" y="15" width="5.3" height="5.3" fill="rgb(191,191,190)"/><rect x="60.0" y="0" width="5.3" height="5.3" fill="rgb(186,186,191)"/><rect x="60.0" y="5" width="5.3" height="5.3" fill="rgb(156,156,158)"/><rect x="60.0" y="10" width="5.3" height="5.3" fill="rgb(209,209,211)"/><rect x="60.0" y="15" width="5.3" height="5.3" fill="rgb(189,189,195)"/><rect x="65.0" y="5" width="5.3" height="5.3" fill="rgb(169,169,178)"/><rect x="65.0" y="15" width="5.3" height="5.3" fill="rgb(193,193,194)"/><rect x="70.0" y="0" width="5.3" height="5.3" fill="rgb(177,177,173)"/><rect x="70.0" y="10" width="5.3" height="5.3" fill="rgb(186,186,186)"/><rect x="70.0" y="15" width="5.3" height="5.3" fill="rgb(195,195,201)"/><rect x="75.0" y="5" width="5.3" height="5.3" fill="rgb(206,206,212)"/><rect x="75.0" y="10" width="5.3" height="5.3" fill="rgb(202,202,201)"/><rect x="75.0" y="15" width="5.3" height="5.3" fill="rgb(206,206,210)"/><rect x="80.0" y="5" width="5.3" height="5.3" fill="rgb(183,183,183)"/><rect x="80.0" y="10" width="5.3" height="5.3" fill="rgb(197,197,204)"/><rect x="80.0" y="15" width="5.3" height="5.3" fill="rgb(169,169,177)"/><rect x="85.0" y="5" width="5.3" height="5.3" fill="rgb(184,184,189)"/><rect x="85.0" y="10" width="5.3" height="5.3" fill="rgb(183,183,179)"/><rect x="85.0" y="15" width="5.3" height="5.3" fill="rgb(191,191,195)"/></svg>
<div class="t" style="left:338.70px;top:446px;;transform:scaleX(0.9870);transform-origin:0 0">File folder</div>
<div class="t" style="left:518.70px;top:446px;;transform:scaleX(1.0365);transform-origin:0 0">4/20/2019</div>
<div class="t" style="left:613.70px;top:446px;;transform:scaleX(0.9893);transform-origin:0 0">10:13:49 AM</div>
<svg class="a" style="left:11px;top:473px" width="15" height="19" viewBox="0 0 15 19">
<rect x="1" y="0" width="12" height="18" fill="#f2cf55"/>
<rect x="4" y="1" width="6" height="16" fill="#f8e08a"/>
<rect x="1" y="0" width="12" height="18" fill="none" stroke="#f5e6b0" stroke-width="1"/></svg>
<svg class="a" style="left:32px;top:473px" width="115" height="25" viewBox="0 0 115 25"><rect x="0.0" y="0" width="5.3" height="5.3" fill="rgb(206,206,206)"/><rect x="0.0" y="5" width="5.3" height="5.3" fill="rgb(193,193,189)"/><rect x="0.0" y="10" width="5.3" height="5.3" fill="rgb(146,146,143)"/><rect x="0.0" y="15" width="5.3" height="5.3" fill="rgb(175,175,175)"/><rect x="5.0" y="5" width="5.3" height="5.3" fill="rgb(158,158,156)"/><rect x="5.0" y="10" width="5.3" height="5.3" fill="rgb(164,164,163)"/><rect x="9.9" y="5" width="5.3" height="5.3" fill="rgb(168,168,175)"/><rect x="9.9" y="10" width="5.3" height="5.3" fill="rgb(149,149,147)"/><rect x="9.9" y="15" width="5.3" height="5.3" fill="rgb(205,205,213)"/><rect x="14.9" y="0" width="5.3" height="5.3" fill="rgb(201,201,198)"/><rect x="14.9" y="5" width="5.3" height="5.3" fill="rgb(192,192,193)"/><rect x="14.9" y="10" width="5.3" height="5.3" fill="rgb(212,212,218)"/><rect x="14.9" y="15" width="5.3" height="5.3" fill="rgb(192,192,197)"/><rect x="19.8" y="5" width="5.3" height="5.3" fill="rgb(176,176,177)"/><rect x="19.8" y="10" width="5.3" height="5.3" fill="rgb(147,147,146)"/><rect x="19.8" y="15" width="5.3" height="5.3" fill="rgb(214,214,214)"/><rect x="24.8" y="5" width="5.3" height="5.3" fill="rgb(208,208,212)"/><rect x="24.8" y="10" width="5.3" height="5.3" fill="rgb(194,194,190)"/><rect x="29.7" y="0" width="5.3" height="5.3" fill="rgb(229,229,233)"/><rect x="29.7" y="5" width="5.3" height="5.3" fill="rgb(216,216,224)"/><rect x="29.7" y="10" width="5.3" height="5.3" fill="rgb(183,183,181)"/><rect x="29.7" y="15" width="5.3" height="5.3" fill="rgb(195,195,191)"/><rect x="34.7" y="5" width="5.3" height="5.3" fill="rgb(196,196,201)"/><rect x="34.7" y="10" width="5.3" height="5.3" fill="rgb(201,201,200)"/><rect x="34.7" y="15" width="5.3" height="5.3" fill="rgb(191,191,197)"/><rect x="39.7" y="5" width="5.3" height="5.3" fill="rgb(153,153,151)"/><rect x="39.7" y="15" width="5.3" height="5.3" fill="rgb(193,193,202)"/><rect x="44.6" y="0" width="5.3" height="5.3" fill="rgb(188,188,196)"/><rect x="44.6" y="5" width="5.3" height="5.3" fill="rgb(161,161,158)"/><rect x="44.6" y="10" width="5.3" height="5.3" fill="rgb(195,195,203)"/><rect x="44.6" y="15" width="5.3" height="5.3" fill="rgb(170,170,176)"/><rect x="49.6" y="5" width="5.3" height="5.3" fill="rgb(199,199,205)"/><rect x="49.6" y="10" width="5.3" height="5.3" fill="rgb(193,193,201)"/><rect x="49.6" y="15" width="5.3" height="5.3" fill="rgb(208,208,206)"/><rect x="54.5" y="5" width="5.3" height="5.3" fill="rgb(203,203,202)"/><rect x="54.5" y="10" width="5.3" height="5.3" fill="rgb(201,201,211)"/><rect x="54.5" y="15" width="5.3" height="5.3" fill="rgb(210,210,220)"/><rect x="59.5" y="5" width="5.3" height="5.3" fill="rgb(154,154,163)"/><rect x="59.5" y="10" width="5.3" height="5.3" fill="rgb(204,204,210)"/><rect x="64.4" y="0" width="5.3" height="5.3" fill="rgb(211,211,210)"/><rect x="64.4" y="5" width="5.3" height="5.3" fill="rgb(157,157,153)"/><rect x="64.4" y="10" width="5.3" height="5.3" fill="rgb(192,192,197)"/><rect x="64.4" y="15" width="5.3" height="5.3" fill="rgb(200,200,203)"/><rect x="69.4" y="5" width="5.3" height="5.3" fill="rgb(156,156,163)"/><rect x="69.4" y="10" width="5.3" height="5.3" fill="rgb(204,204,211)"/><rect x="74.3" y="5" width="5.3" height="5.3" fill="rgb(157,157,154)"/><rect x="74.3" y="10" width="5.3" height="5.3" fill="rgb(179,179,176)"/><rect x="79.3" y="0" width="5.3" height="5.3" fill="rgb(175,175,177)"/><rect x="79.3" y="5" width="5.3" height="5.3" fill="rgb(167,167,173)"/><rect x="79.3" y="10" width="5.3" height="5.3" fill="rgb(197,197,202)"/><rect x="79.3" y="15" width="5.3" height="5.3" fill="rgb(172,172,181)"/><rect x="84.3" y="5" width="5.3" height="5.3" fill="rgb(181,181,178)"/><rect x="84.3" y="10" width="5.3" height="5.3" fill="rgb(161,161,167)"/><rect x="84.3" y="15" width="5.3" height="5.3" fill="rgb(178,178,183)"/><rect x="89.2" y="0" width="5.3" height="5.3" fill="rgb(211,211,219)"/><rect x="89.2" y="10" width="5.3" height="5.3" fill="rgb(147,147,146)"/><rect x="89.2" y="15" width="5.3" height="5.3" fill="rgb(165,165,174)"/><rect x="94.2" y="5" width="5.3" height="5.3" fill="rgb(192,192,195)"/><rect x="99.1" y="0" width="5.3" height="5.3" fill="rgb(175,175,183)"/><rect x="99.1" y="5" width="5.3" height="5.3" fill="rgb(196,196,194)"/><rect x="99.1" y="10" width="5.3" height="5.3" fill="rgb(181,181,180)"/><rect x="104.1" y="0" width="5.3" height="5.3" fill="rgb(213,213,216)"/><rect x="104.1" y="5" width="5.3" height="5.3" fill="rgb(209,209,206)"/><rect x="104.1" y="10" width="5.3" height="5.3" fill="rgb(209,209,219)"/><rect x="104.1" y="15" width="5.3" height="5.3" fill="rgb(184,184,188)"/><rect x="109.0" y="10" width="5.3" height="5.3" fill="rgb(211,211,214)"/><rect x="109.0" y="15" width="5.3" height="5.3" fill="rgb(212,212,211)"/></svg>
<div class="t" style="left:338.70px;top:475px;;transform:scaleX(0.9870);transform-origin:0 0">File folder</div>
<div class="t" style="left:518.70px;top:475px;;transform:scaleX(1.0365);transform-origin:0 0">4/20/2019</div>
<div class="t" style="left:612.70px;top:475px;;transform:scaleX(0.9991);transform-origin:0 0">9:31:10 AM</div>
<svg class="a" style="left:11px;top:502px" width="15" height="19" viewBox="0 0 15 19">
<rect x="1" y="0" width="12" height="18" fill="#f2cf55"/>
<rect x="4" y="1" width="6" height="16" fill="#f8e08a"/>
<rect x="1" y="0" width="12" height="18" fill="none" stroke="#f5e6b0" stroke-width="1"/></svg>
<svg class="a" style="left:32px;top:502px" width="41" height="25" viewBox="0 0 41 25"><rect x="0.0" y="5" width="5.3" height="5.3" fill="rgb(215,215,218)"/><rect x="0.0" y="10" width="5.3" height="5.3" fill="rgb(192,192,194)"/><rect x="0.0" y="15" width="5.3" height="5.3" fill="rgb(177,177,175)"/><rect x="5.0" y="5" width="5.3" height="5.3" fill="rgb(194,194,197)"/><rect x="5.0" y="10" width="5.3" height="5.3" fill="rgb(149,149,153)"/><rect x="5.0" y="15" width="5.3" height="5.3" fill="rgb(161,161,160)"/><rect x="10.0" y="0" width="5.3" height="5.3" fill="rgb(189,189,195)"/><rect x="10.0" y="5" width="5.3" height="5.3" fill="rgb(213,213,215)"/><rect x="10.0" y="10" width="5.3" height="5.3" fill="rgb(149,149,159)"/><rect x="10.0" y="15" width="5.3" height="5.3" fill="rgb(208,208,205)"/><rect x="15.0" y="5" width="5.3" height="5.3" fill="rgb(219,219,217)"/><rect x="15.0" y="10" width="5.3" height="5.3" fill="rgb(211,211,217)"/><rect x="15.0" y="15" width="5.3" height="5.3" fill="rgb(182,182,182)"/><rect x="20.0" y="0" width="5.3" height="5.3" fill="rgb(219,219,221)"/><rect x="20.0" y="5" width="5.3" height="5.3" fill="rgb(204,204,209)"/><rect x="20.0" y="10" width="5.3" height="5.3" fill="rgb(145,145,144)"/><rect x="20.0" y="15" width="5.3" height="5.3" fill="rgb(221,221,224)"/><rect x="25.0" y="5" width="5.3" height="5.3" fill="rgb(161,161,159)"/><rect x="25.0" y="10" width="5.3" height="5.3" fill="rgb(172,172,172)"/><rect x="25.0" y="15" width="5.3" height="5.3" fill="rgb(214,214,211)"/><rect x="30.0" y="5" width="5.3" height="5.3" fill="rgb(169,169,173)"/><rect x="35.0" y="10" width="5.3" height="5.3" fill="rgb(175,175,179)"/><rect x="35.0" y="15" width="5.3" height="5.3" fill="rgb(209,209,213)"/></svg>
<div class="t" style="left:338.70px;top:504px;;transform:scaleX(0.9870);transform-origin:0 0">File folder</div>
<div class="t" style="left:518.70px;top:504px;;transform:scaleX(1.0365);transform-origin:0 0">9/14/2019</div>
<div class="t" style="left:612.70px;top:504px;;transform:scaleX(0.9991);transform-origin:0 0">8:37:48 AM</div>
<svg class="a" style="left:7px;top:528px" width="20" height="23" viewBox="0 0 20 23">
<rect x="0" y="0" width="20" height="21" fill="#f6d0d2"/>
<rect x="10" y="0" width="6" height="15" fill="#f1a9b0"/>
<rect x="5" y="6" width="4" height="3" fill="#fff" opacity="0.7"/>
<rect x="12" y="6" width="4" height="3" fill="#fce6e6"/>
<rect x="4.5" y="21" width="15" height="2" fill="#8e2a36"/></svg>
<svg class="a" style="left:32px;top:531px" width="180" height="25" viewBox="0 0 180 25"><rect x="0.0" y="0" width="5.3" height="5.3" fill="rgb(216,216,219)"/><rect x="0.0" y="5" width="5.3" height="5.3" fill="rgb(188,188,195)"/><rect x="0.0" y="10" width="5.3" height="5.3" fill="rgb(146,146,156)"/><rect x="5.0" y="5" width="5.3" height="5.3" fill="rgb(170,170,177)"/><rect x="5.0" y="10" width="5.3" height="5.3" fill="rgb(167,167,177)"/><rect x="5.0" y="15" width="5.3" height="5.3" fill="rgb(174,174,171)"/><rect x="9.9" y="0" width="5.3" height="5.3" fill="rgb(195,195,195)"/><rect x="9.9" y="5" width="5.3" height="5.3" fill="rgb(174,174,181)"/><rect x="9.9" y="10" width="5.3" height="5.3" fill="rgb(156,156,156)"/><rect x="9.9" y="15" width="5.3" height="5.3" fill="rgb(173,173,182)"/><rect x="14.9" y="0" width="5.3" height="5.3" fill="rgb(200,200,196)"/><rect x="14.9" y="5" width="5.3" height="5.3" fill="rgb(207,207,207)"/><rect x="14.9" y="10" width="5.3" height="5.3" fill="rgb(173,173,174)"/><rect x="14.9" y="15" width="5.3" height="5.3" fill="rgb(211,211,218)"/><rect x="19.9" y="5" width="5.3" height="5.3" fill="rgb(157,157,167)"/><rect x="19.9" y="10" width="5.3" height="5.3" fill="rgb(194,194,199)"/><rect x="19.9" y="15" width="5.3" height="5.3" fill="rgb(206,206,212)"/><rect x="24.9" y="5" width="5.3" height="5.3" fill="rgb(218,218,216)"/><rect x="24.9" y="10" width="5.3" height="5.3" fill="rgb(172,172,171)"/><rect x="24.9" y="15" width="5.3" height="5.3" fill="rgb(188,188,192)"/><rect x="29.8" y="0" width="5.3" height="5.3" fill="rgb(217,217,221)"/><rect x="29.8" y="5" width="5.3" height="5.3" fill="rgb(156,156,157)"/><rect x="29.8" y="10" width="5.3" height="5.3" fill="rgb(185,185,195)"/><rect x="29.8" y="15" width="5.3" height="5.3" fill="rgb(210,210,216)"/><rect x="34.8" y="5" width="5.3" height="5.3" fill="rgb(159,159,158)"/><rect x="34.8" y="10" width="5.3" height="5.3" fill="rgb(150,150,158)"/><rect x="34.8" y="15" width="5.3" height="5.3" fill="rgb(179,179,179)"/><rect x="39.8" y="5" width="5.3" height="5.3" fill="rgb(195,195,201)"/><rect x="39.8" y="10" width="5.3" height="5.3" fill="rgb(182,182,179)"/><rect x="39.8" y="15" width="5.3" height="5.3" fill="rgb(171,171,181)"/><rect x="44.8" y="5" width="5.3" height="5.3" fill="rgb(209,209,214)"/><rect x="44.8" y="10" width="5.3" height="5.3" fill="rgb(158,158,167)"/><rect x="49.7" y="5" width="5.3" height="5.3" fill="rgb(165,165,166)"/><rect x="49.7" y="10" width="5.3" height="5.3" fill="rgb(149,149,150)"/><rect x="54.7" y="0" width="5.3" height="5.3" fill="rgb(175,175,182)"/><rect x="54.7" y="5" width="5.3" height="5.3" fill="rgb(178,178,174)"/><rect x="54.7" y="10" width="5.3" height="5.3" fill="rgb(148,148,148)"/><rect x="54.7" y="15" width="5.3" height="5.3" fill="rgb(183,183,182)"/><rect x="59.7" y="0" width="5.3" height="5.3" fill="rgb(179,179,185)"/><rect x="59.7" y="5" width="5.3" height="5.3" fill="rgb(218,218,223)"/><rect x="64.6" y="5" width="5.3" height="5.3" fill="rgb(211,211,217)"/><rect x="64.6" y="10" width="5.3" height="5.3" fill="rgb(157,157,162)"/><rect x="69.6" y="5" width="5.3" height="5.3" fill="rgb(209,209,212)"/><rect x="69.6" y="10" width="5.3" height="5.3" fill="rgb(148,148,147)"/><rect x="69.6" y="15" width="5.3" height="5.3" fill="rgb(183,183,193)"/><rect x="74.6" y="0" width="5.3" height="5.3" fill="rgb(207,207,215)"/><rect x="74.6" y="5" width="5.3" height="5.3" fill="rgb(189,189,187)"/><rect x="74.6" y="10" width="5.3" height="5.3" fill="rgb(165,165,169)"/><rect x="79.6" y="0" width="5.3" height="5.3" fill="rgb(226,226,222)"/><rect x="79.6" y="5" width="5.3" height="5.3" fill="rgb(183,183,192)"/><rect x="79.6" y="10" width="5.3" height="5.3" fill="rgb(207,207,207)"/><rect x="79.6" y="15" width="5.3" height="5.3" fill="rgb(204,204,209)"/><rect x="84.5" y="5" width="5.3" height="5.3" fill="rgb(170,170,172)"/><rect x="84.5" y="10" width="5.3" height="5.3" fill="rgb(148,148,158)"/><rect x="84.5" y="15" width="5.3" height="5.3" fill="rgb(211,211,210)"/><rect x="89.5" y="5" width="5.3" height="5.3" fill="rgb(152,152,152)"/><rect x="89.5" y="10" width="5.3" height="5.3" fill="rgb(180,180,188)"/><rect x="89.5" y="15" width="5.3" height="5.3" fill="rgb(193,193,196)"/><rect x="94.5" y="0" width="5.3" height="5.3" fill="rgb(182,182,189)"/><rect x="94.5" y="5" width="5.3" height="5.3" fill="rgb(174,174,182)"/><rect x="94.5" y="10" width="5.3" height="5.3" fill="rgb(189,189,188)"/><rect x="99.4" y="5" width="5.3" height="5.3" fill="rgb(168,168,171)"/><rect x="99.4" y="10" width="5.3" height="5.3" fill="rgb(151,151,152)"/><rect x="99.4" y="15" width="5.3" height="5.3" fill="rgb(191,191,201)"/><rect x="104.4" y="0" width="5.3" height="5.3" fill="rgb(210,210,213)"/><rect x="104.4" y="10" width="5.3" height="5.3" fill="rgb(176,176,180)"/><rect x="104.4" y="15" width="5.3" height="5.3" fill="rgb(221,221,218)"/><rect x="114.4" y="0" width="5.3" height="5.3" fill="rgb(177,177,185)"/><rect x="114.4" y="5" width="5.3" height="5.3" fill="rgb(211,211,215)"/><rect x="114.4" y="10" width="5.3" height="5.3" fill="rgb(176,176,177)"/><rect x="114.4" y="15" width="5.3" height="5.3" fill="rgb(184,184,189)"/><rect x="119.3" y="0" width="5.3" height="5.3" fill="rgb(178,178,174)"/><rect x="119.3" y="5" width="5.3" height="5.3" fill="rgb(167,167,176)"/><rect x="119.3" y="10" width="5.3" height="5.3" fill="rgb(215,215,221)"/><rect x="119.3" y="15" width="5.3" height="5.3" fill="rgb(191,191,193)"/><rect x="124.3" y="10" width="5.3" height="5.3" fill="rgb(149,149,159)"/><rect x="124.3" y="15" width="5.3" height="5.3" fill="rgb(207,207,205)"/><rect x="129.3" y="5" width="5.3" height="5.3" fill="rgb(151,151,154)"/><rect x="129.3" y="10" width="5.3" height="5.3" fill="rgb(161,161,159)"/><rect x="129.3" y="15" width="5.3" height="5.3" fill="rgb(210,210,212)"/><rect x="134.2" y="15" width="5.3" height="5.3" fill="rgb(210,210,210)"/><rect x="139.2" y="5" width="5.3" height="5.3" fill="rgb(216,216,216)"/><rect x="139.2" y="10" width="5.3" height="5.3" fill="rgb(167,167,167)"/><rect x="139.2" y="15" width="5.3" height="5.3" fill="rgb(207,207,215)"/><rect x="144.2" y="0" width="5.3" height="5.3" fill="rgb(198,198,208)"/><rect x="144.2" y="5" width="5.3" height="5.3" fill="rgb(182,182,191)"/><rect x="144.2" y="10" width="5.3" height="5.3" fill="rgb(196,196,196)"/><rect x="149.2" y="5" width="5.3" height="5.3" fill="rgb(215,215,219)"/><rect x="149.2" y="10" width="5.3" height="5.3" fill="rgb(159,159,158)"/><rect x="149.2" y="15" width="5.3" height="5.3" fill="rgb(162,162,168)"/><rect x="154.1" y="0" width="5.3" height="5.3" fill="rgb(195,195,195)"/><rect x="154.1" y="5" width="5.3" height="5.3" fill="rgb(177,177,181)"/><rect x="154.1" y="10" width="5.3" height="5.3" fill="rgb(170,170,176)"/><rect x="154.1" y="15" width="5.3" height="5.3" fill="rgb(184,184,185)"/><rect x="159.1" y="5" width="5.3" height="5.3" fill="rgb(183,183,190)"/><rect x="159.1" y="10" width="5.3" height="5.3" fill="rgb(181,181,183)"/><rect x="159.1" y="15" width="5.3" height="5.3" fill="rgb(199,199,196)"/><rect x="164.1" y="5" width="5.3" height="5.3" fill="rgb(172,172,180)"/><rect x="164.1" y="10" width="5.3" height="5.3" fill="rgb(187,187,188)"/><rect x="164.1" y="15" width="5.3" height="5.3" fill="rgb(171,171,169)"/><rect x="169.1" y="10" width="5.3" height="5.3" fill="rgb(194,194,197)"/><rect x="174.0" y="0" width="5.3" height="5.3" fill="rgb(217,217,222)"/><rect x="174.0" y="5" width="5.3" height="5.3" fill="rgb(201,201,206)"/><rect x="174.0" y="10" width="5.3" height="5.3" fill="rgb(191,191,189)"/></svg>
<div class="t" style="right:1291.30px;top:533px;;transform:scaleX(0.9145);transform-origin:100% 0">136 KB</div>
<div class="t" style="left:338.70px;top:533px;;transform:scaleX(1.0179);transform-origin:0 0">Adobe Acrobat Do...</div>
<div class="t" style="left:519.70px;top:533px;;transform:scaleX(1.0323);transform-origin:0 0">12/23/2016</div>
<div class="t" style="left:622.70px;top:533px;;transform:scaleX(0.9991);transform-origin:0 0">6:10:52 AM</div>
<svg class="a" style="left:10px;top:558px" width="18" height="22" viewBox="0 0 18 22">
<path d="M0.5 0.5h12l4 4v17h-16z" fill="#fff" stroke="#8a8a8a"/>
<path d="M12.5 0.5v4h4" fill="none" stroke="#8a8a8a"/>
<g stroke="#9a9a9a"><path d="M3 4.5h8M3 6.5h11M3 8.5h11M3 10.5h11M3 12.5h11M3 14.5h11M3 16.5h11M3 18.5h11"/></g></svg>
<div class="t" style="left:32.70px;top:562px;;transform:scaleX(1.0433);transform-origin:0 0">ovirt-tips.txt</div>
<div class="t" style="right:1291.30px;top:562px;;transform:scaleX(0.8967);transform-origin:100% 0">2 KB</div>
<div class="t" style="left:338.70px;top:562px;;transform:scaleX(0.9828);transform-origin:0 0">Text Document</div>
<div class="t" style="left:518.70px;top:562px;;transform:scaleX(1.0365);transform-origin:0 0">6/13/2017</div>
<div class="t" style="left:612.70px;top:562px;;transform:scaleX(1.0141);transform-origin:0 0">8:11:44 AM</div>
<svg class="a" style="left:10px;top:587px" width="18" height="22" viewBox="0 0 18 22">
<path d="M0.5 0.5h12l4 4v17h-16z" fill="#fff" stroke="#8a8a8a"/>
<path d="M12.5 0.5v4h4" fill="none" stroke="#8a8a8a"/>
<g stroke="#9a9a9a"><path d="M3 4.5h8M3 6.5h11M3 8.5h11M3 10.5h11M3 12.5h11M3 14.5h11M3 16.5h11M3 18.5h11"/></g></svg>
<div class="t" style="left:32.70px;top:591px;;transform:scaleX(1.0358);transform-origin:0 0">pkumar.txt</div>
<div class="t" style="right:1291.30px;top:591px;;transform:scaleX(0.8967);transform-origin:100% 0">0 KB</div>
<div class="t" style="left:338.70px;top:591px;;transform:scaleX(0.9828);transform-origin:0 0">Text Document</div>
<div class="t" style="left:518.70px;top:591px;;transform:scaleX(1.0365);transform-origin:0 0">9/14/2019</div>
<div class="t" style="left:612.70px;top:591px;;transform:scaleX(0.9667);transform-origin:0 0">2:44:12 PM</div>
<svg class="a" style="left:7px;top:616px" width="24" height="22" viewBox="0 0 24 22">
<path d="M5.5 0.5h11l5 5v16h-16z" fill="#fff" stroke="#8a8a8a"/>
<path d="M16.5 0.5v5h5" fill="none" stroke="#8a8a8a"/>
<g stroke="#9aa6b5"><path d="M14 9.5h5M14 12.5h5M14 15.5h5M14 18.5h5"/></g>
<rect x="0.5" y="5.5" width="14" height="13" fill="#eef4fb" stroke="#2b4f80"/>
<text x="7.5" y="16.5" font-family="Liberation Serif" font-style="italic" font-weight="bold" font-size="13" fill="#2b4f80" text-anchor="middle">W</text></svg>
<div class="t" style="left:32.70px;top:620px;;transform:scaleX(0.9166);transform-origin:0 0">Pradeep Kumar_Resu...</div>
<div class="t" style="right:1291.30px;top:620px;;transform:scaleX(0.9145);transform-origin:100% 0">109 KB</div>
<div class="t" style="left:338.70px;top:620px;;transform:scaleX(1.0080);transform-origin:0 0">Microsoft Word 97...</div>
<div class="t" style="left:518.70px;top:620px;;transform:scaleX(1.0365);transform-origin:0 0">9/14/2018</div>
<div class="t" style="left:612.70px;top:620px;;transform:scaleX(0.9667);transform-origin:0 0">7:48:19 PM</div>
<svg class="a" style="left:10px;top:645px" width="18" height="22" viewBox="0 0 18 22">
<path d="M0.5 0.5h12l4 4v17h-16z" fill="#fff" stroke="#8a8a8a"/>
<path d="M12.5 0.5v4h4" fill="none" stroke="#8a8a8a"/>
<g stroke="#9a9a9a"><path d="M3 4.5h8M3 6.5h11M3 8.5h11M3 10.5h11M3 12.5h11M3 14.5h11M3 16.5h11M3 18.5h11"/></g></svg>
<div class="t" style="left:32.70px;top:649px;;transform:scaleX(0.9636);transform-origin:0 0">Redhat-Test-questions...</div>
<div class="t" style="right:1291.30px;top:649px;;transform:scaleX(0.8967);transform-origin:100% 0">5 KB</div>
<div class="t" style="left:338.70px;top:649px;;transform:scaleX(0.9828);transform-origin:0 0">Text Document</div>
<div class="t" style="left:518.70px;top:649px;;transform:scaleX(1.0365);transform-origin:0 0">3/19/2018</div>
<div class="t" style="left:612.70px;top:649px;;transform:scaleX(0.9991);transform-origin:0 0">9:12:20 AM</div>
<svg class="a" style="left:10px;top:674px" width="18" height="22" viewBox="0 0 18 22">
<path d="M0.5 0.5h12l4 4v17h-16z" fill="#fff" stroke="#8a8a8a"/>
<path d="M12.5 0.5v4h4" fill="none" stroke="#8a8a8a"/>
<g stroke="#9a9a9a"><path d="M3 4.5h8M3 6.5h11M3 8.5h11M3 10.5h11M3 12.5h11M3 14.5h11M3 16.5h11M3 18.5h11"/></g></svg>
<div class="t" style="left:32.70px;top:678px;;transform:scaleX(0.9786);transform-origin:0 0">scenario-based-linux-i...</div>
<div class="t" style="right:1291.30px;top:678px;;transform:scaleX(0.8967);transform-origin:100% 0">4 KB</div>
<div class="t" style="left:338.70px;top:678px;;transform:scaleX(0.9828);transform-origin:0 0">Text Document</div>
<div class="t" style="left:518.70px;top:678px;;transform:scaleX(1.0365);transform-origin:0 0">6/13/2017</div>
<div class="t" style="left:612.70px;top:678px;;transform:scaleX(0.9991);transform-origin:0 0">8:12:05 AM</div>
<svg class="a" style="left:7px;top:703px" width="24" height="22" viewBox="0 0 24 22">
<path d="M5.5 0.5h11l5 5v16h-16z" fill="#fff" stroke="#8a8a8a"/>
<path d="M16.5 0.5v5h5" fill="none" stroke="#8a8a8a"/>
<rect x="0" y="4" width="10" height="14" fill="#2b5797"/>
<text x="5" y="15" font-family="Liberation Sans" font-weight="bold" font-size="10" fill="#fff" text-anchor="middle">W</text>
<path d="M11.5 12a4.5 4.5 0 0 1 8-2.5M20 13a4.5 4.5 0 0 1-8 2.5" fill="none" stroke="#9aa6b5" stroke-width="2"/></svg>
<div class="t" style="left:32.70px;top:707px;;transform:scaleX(0.9729);transform-origin:0 0">Technical-Doc-RHS.odt</div>
<div class="t" style="right:1291.30px;top:707px;;transform:scaleX(0.9181);transform-origin:100% 0">1,109 KB</div>
<div class="t" style="left:338.70px;top:707px;;transform:scaleX(0.9892);transform-origin:0 0">OpenDocument Text</div>
<div class="t" style="left:518.70px;top:707px;;transform:scaleX(1.0365);transform-origin:0 0">2/22/2017</div>
<div class="t" style="left:613.70px;top:707px;;transform:scaleX(0.9794);transform-origin:0 0">10:00:54 AM</div>
<svg class="a" style="left:821px;top:298px" width="16" height="19" viewBox="0 0 16 19">
<rect x="2" y="0" width="11" height="17" fill="#f2cf55"/>
<rect x="5" y="0" width="8" height="17" fill="#f7de7f"/>
<path d="M2 17.5h12M2.5 18V10M0.5 12.5l2-3 2 3" fill="none" stroke="#3a3020" stroke-width="2"/></svg>
<div class="t" style="left:844px;top:301px;">..</div>
<div class="t" style="left:1149.70px;top:301px;;transform:scaleX(1.0105);transform-origin:0 0">9/14/2019 2:44:12 PM</div>
<div class="t" style="left:1374.70px;top:301px;;transform:scaleX(1.0145);transform-origin:0 0">rwxr-xr-x</div>
<div class="t" style="left:1494.70px;top:301px;;transform:scaleX(1.0634);transform-origin:0 0">root</div>
<svg class="a" style="left:822px;top:328px" width="15" height="19" viewBox="0 0 15 19">
<rect x="1" y="0" width="12" height="18" fill="#f2cf55"/>
<rect x="4" y="1" width="6" height="16" fill="#f8e08a"/>
<rect x="1" y="0" width="12" height="18" fill="none" stroke="#f5e6b0" stroke-width="1"/></svg>
<div class="t" style="left:843.70px;top:330px;;transform:scaleX(1.0543);transform-origin:0 0">upload</div>
<div class="t" style="left:1149.70px;top:330px;;transform:scaleX(1.0105);transform-origin:0 0">9/14/2019 2:45:42 PM</div>
<div class="t" style="left:1374.70px;top:330px;;transform:scaleX(1.0145);transform-origin:0 0">rwxr-xr-x</div>
<div class="t" style="left:1494.70px;top:330px;;transform:scaleX(0.9988);transform-origin:0 0">1002</div>
<svg class="a" style="left:821px;top:355px" width="18" height="22" viewBox="0 0 18 22">
<path d="M0.5 0.5h12l4 4v17h-16z" fill="#fff" stroke="#8a8a8a"/>
<path d="M12.5 0.5v4h4" fill="none" stroke="#8a8a8a"/>
<g stroke="#9a9a9a"><path d="M3 4.5h8M3 6.5h11M3 8.5h11M3 10.5h11M3 12.5h11M3 14.5h11M3 16.5h11M3 18.5h11"/></g></svg>
<div class="t" style="left:843.70px;top:359px;;transform:scaleX(1.0358);transform-origin:0 0">pkumar.txt</div>
<div class="t" style="right:480.30px;top:359px;;transform:scaleX(0.8967);transform-origin:100% 0">0 KB</div>
<div class="t" style="left:1149.70px;top:359px;;transform:scaleX(1.0105);transform-origin:0 0">9/14/2019 2:44:12 PM</div>
<div class="t" style="left:1374.70px;top:359px;;transform:scaleX(1.0828);transform-origin:0 0">rw-r--r--</div>
<div class="t" style="left:1494.70px;top:359px;;transform:scaleX(1.0634);transform-origin:0 0">root</div>
<div class="t" style="left:992.70px;top:543px;font-weight:bold;color:#1c66c2;font-size:19px;letter-spacing:1px;transform:scaleX(0.9502);transform-origin:0 0">www.linuxtechi.com</div>
<svg class="a" style="left:0px;top:0px" width="1617" height="934" viewBox="0 0 1617 934"><path d="M124 602.5L820 373" stroke="#c8262c" stroke-width="1.8"/></svg>
<div class="t" style="left:5.70px;top:879px;;transform:scaleX(0.9994);transform-origin:0 0">0 B of 1.33 MB in 0 of 14</div>
<div class="t" style="left:816.70px;top:879px;;transform:scaleX(1.0060);transform-origin:0 0">0 B of 0 B in 0 of 2</div>
<div class="t" style="right:5.30px;top:879px;;transform:scaleX(1.0133);transform-origin:100% 0">4 hidden</div>
<div class="a" style="left:1px;top:903px;width:1615px;height:1px;background:#dcdcdc"></div>
<div class="a" style="left:1293px;top:905px;width:1px;height:28px;background:#dcdcdc"></div>
<div class="a" style="left:1295px;top:905px;width:1px;height:28px;background:#dcdcdc"></div>
<div class="a" style="left:1344px;top:905px;width:1px;height:28px;background:#dcdcdc"></div>
<div class="a" style="left:1347px;top:905px;width:1px;height:28px;background:#dcdcdc"></div>
<div class="a" style="left:1446px;top:905px;width:1px;height:28px;background:#dcdcdc"></div>
<div class="a" style="left:1449px;top:905px;width:1px;height:28px;background:#dcdcdc"></div>
<div class="a" style="left:1497px;top:905px;width:1px;height:28px;background:#dcdcdc"></div>
<div class="a" style="left:1500px;top:905px;width:1px;height:28px;background:#dcdcdc"></div>
<div class="a" style="left:1611px;top:920px;width:2px;height:2px;background:#bdbdbd"></div>
<div class="a" style="left:1607px;top:924px;width:2px;height:2px;background:#bdbdbd"></div>
<div class="a" style="left:1611px;top:924px;width:2px;height:2px;background:#bdbdbd"></div>
<div class="a" style="left:1603px;top:928px;width:2px;height:2px;background:#bdbdbd"></div>
<div class="a" style="left:1607px;top:928px;width:2px;height:2px;background:#bdbdbd"></div>
<div class="a" style="left:1611px;top:928px;width:2px;height:2px;background:#bdbdbd"></div>
<svg class="a" style="left:1310px;top:906px" width="17" height="23" viewBox="0 0 17 23">
<path d="M3.5 10V6a5 5 0 0 1 10 0v4" fill="none" stroke="#b8951a" stroke-width="2.2"/>
<rect x="1" y="10" width="15" height="12" rx="1" fill="#f2cc3a" stroke="#b08a10"/>
<g stroke="#d8b020" stroke-width="0.8"><path d="M2 13h13M2 16h13M2 19h13"/></g>
<rect x="7.5" y="14" width="2" height="4" fill="#333"/></svg>
<div class="t" style="left:1367.70px;top:910px;;transform:scaleX(0.8869);transform-origin:0 0">SFTP-3</div>
<svg class="a" style="left:1460px;top:907px" width="22" height="22" viewBox="0 0 22 22">
<path d="M0.5 0.5h6l2 2h9v11h-17z" fill="#dcdcdc" stroke="#b0b0b0"/>
<rect x="14" y="2" width="6" height="12" fill="#e2e2e2" stroke="#b8b8b8"/>
<path d="M10 14v4M4 20h12M10 18v2" stroke="#a8a8a8" stroke-width="2"/></svg>
<div class="t" style="left:1526.70px;top:910px;;transform:scaleX(0.9657);transform-origin:0 0">0:45:26</div>
<div class="a" style="left:0px;top:0px;width:1617px;height:1px;background:#9a9a9a"></div>
<div class="a" style="left:0px;top:0px;width:1px;height:934px;background:#8c8c8c"></div>
<div class="a" style="left:1616px;top:0px;width:1px;height:934px;background:#8c8c8c"></div>
<div class="a" style="left:0px;top:933px;width:1617px;height:1px;background:#8c8c8c"></div>
</body></html>
